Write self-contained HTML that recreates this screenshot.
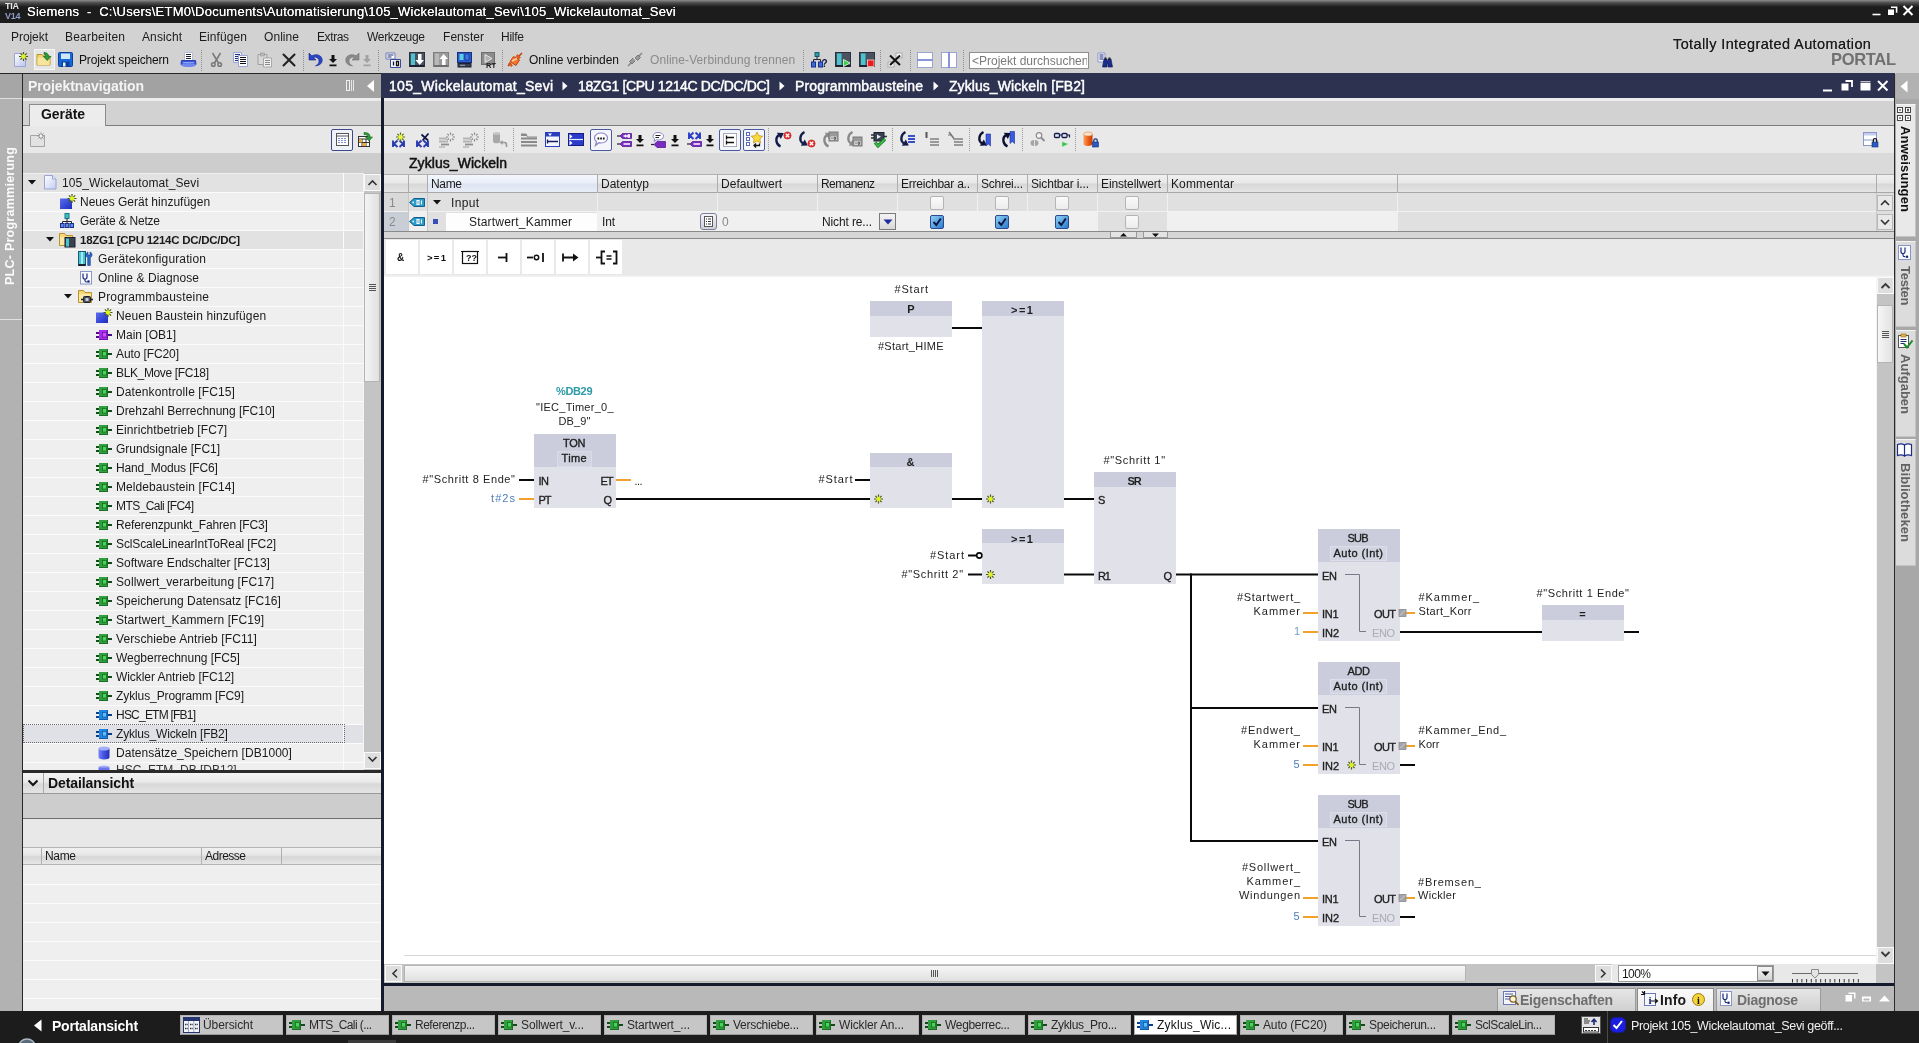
<!DOCTYPE html>
<html lang="de"><head><meta charset="utf-8"><title>TIA Portal</title>
<style>
html,body{margin:0;padding:0;}
body{width:1919px;height:1043px;overflow:hidden;background:#d2d2d2;position:relative;
 font-family:"Liberation Sans",sans-serif;font-size:12px;color:#1a1a1a;}
div{position:absolute;box-sizing:border-box;}
#app{left:0;top:0;width:1919px;height:1043px;will-change:transform;}
span.t{position:absolute;white-space:nowrap;display:block;}
svg{position:absolute;overflow:visible;}
.hdrgrad{background:linear-gradient(#f2f2f2 0%,#e4e4e4 45%,#d4d4d4 55%,#e2e2e2 100%);}
</style></head>
<body>
<div id="app">
<div style="left:0px;top:0px;width:1919px;height:23px;background:linear-gradient(#8a8a8a 0px,#4a4a4a 3px,#1c1c1c 7px,#1c1c1c 100%);"></div>
<span class="t" style="left:5px;top:0.5px;height:10px;line-height:10px;font-size:9px;color:#e8e8e8;font-weight:bold;letter-spacing:-0.3px;">TIA</span>
<span class="t" style="left:5px;top:10.5px;height:10px;line-height:10px;font-size:9px;color:#8f9bc4;font-weight:bold;letter-spacing:-0.3px;">V14</span>
<span class="t" style="left:27px;top:3.0px;height:17px;line-height:17px;font-size:13px;color:#ffffff;letter-spacing:0.24px;text-shadow:0 0 0.6px #fff;">Siemens&nbsp; -&nbsp; C:\Users\ETM0\Documents\Automatisierung\105_Wickelautomat_Sevi\105_Wickelautomat_Sevi</span>
<svg style="left:1870px;top:3px" width="46" height="18" viewBox="0 0 46 18"><g stroke="#fff" fill="none"><path d="M2.5 11.5h8" stroke-width="1.6"/><path d="M21 4.2h5.6v5.6" stroke-width="1.6"/><rect x="18" y="6.5" width="6" height="5.5" fill="#fff" stroke="none"/><path d="M33.5 3l9 9m0-9l-9 9" stroke-width="2"/></g></svg>
<div style="left:0px;top:23px;width:1919px;height:51px;background:#d2d2d2;"></div>
<span class="t" style="left:11px;top:29.0px;height:16px;line-height:16px;font-size:12px;color:#1c1c1c;letter-spacing:-0.06px;">Projekt</span>
<span class="t" style="left:65px;top:29.0px;height:16px;line-height:16px;font-size:12px;color:#1c1c1c;letter-spacing:0.22px;">Bearbeiten</span>
<span class="t" style="left:142px;top:29.0px;height:16px;line-height:16px;font-size:12px;color:#1c1c1c;letter-spacing:0.11px;">Ansicht</span>
<span class="t" style="left:199px;top:29.0px;height:16px;line-height:16px;font-size:12px;color:#1c1c1c;letter-spacing:0.09px;">Einfügen</span>
<span class="t" style="left:264px;top:29.0px;height:16px;line-height:16px;font-size:12px;color:#1c1c1c;letter-spacing:0.06px;">Online</span>
<span class="t" style="left:317px;top:29.0px;height:16px;line-height:16px;font-size:12px;color:#1c1c1c;letter-spacing:-0.4px;">Extras</span>
<span class="t" style="left:367px;top:29.0px;height:16px;line-height:16px;font-size:12px;color:#1c1c1c;letter-spacing:-0.31px;">Werkzeuge</span>
<span class="t" style="left:443px;top:29.0px;height:16px;line-height:16px;font-size:12px;color:#1c1c1c;letter-spacing:0.05px;">Fenster</span>
<span class="t" style="left:501px;top:29.0px;height:16px;line-height:16px;font-size:12px;color:#1c1c1c;letter-spacing:-0.25px;">Hilfe</span>
<span class="t" style="left:79px;top:52.0px;height:16px;line-height:16px;font-size:12px;color:#111;letter-spacing:-0.17px;">Projekt speichern</span>
<span class="t" style="left:529px;top:52.0px;height:16px;line-height:16px;font-size:12px;color:#111;letter-spacing:-0.05px;">Online verbinden</span>
<span class="t" style="left:650px;top:52.0px;height:16px;line-height:16px;font-size:12px;color:#8a8a8a;letter-spacing:0.07px;">Online-Verbindung trennen</span>
<span class="t" style="left:1673px;top:34.8px;height:18.5px;line-height:18.5px;font-size:14.5px;color:#1c1c1c;letter-spacing:0.39px;text-shadow:0 0 0.5px #333;">Totally Integrated Automation</span>
<span class="t" style="left:1831px;top:49.2px;height:20.5px;line-height:20.5px;font-size:16.5px;color:#707070;font-weight:bold;letter-spacing:-0.32px;">PORTAL</span>
<div style="left:969px;top:52px;width:120px;height:17px;background:#fff;border:1px solid #8e8e8e;overflow:hidden;"></div>
<span class="t" style="left:972px;top:53.0px;height:16px;line-height:16px;font-size:12px;color:#7a7a7a;width:115px;overflow:hidden;">&lt;Projekt durchsuchen</span>
<div style="left:0px;top:74px;width:23px;height:937px;background:#b2b2b2;"></div>
<div style="left:0px;top:74px;width:23px;height:25px;background:#a6a6a6;"></div>
<div style="left:0px;top:73px;width:384px;height:1px;background:#262626;"></div>
<div style="left:0px;top:98px;width:23px;height:1px;background:#e0e0e0;"></div>
<div style="left:0px;top:319px;width:23px;height:1px;background:#e0e0e0;"></div>
<div style="left:22px;top:74px;width:1px;height:937px;background:#262626;"></div>
<span class="t" style="left:0;top:0;width:140px;height:14px;line-height:14px;font-size:12.5px;font-weight:bold;color:#fafafa;letter-spacing:0.25px;transform-origin:0 0;transform:translate(3px,285px) rotate(-90deg);">PLC- Programmierung</span>
<div style="left:23px;top:74px;width:358px;height:24px;background:#a2a2a2;"></div>
<span class="t" style="left:28px;top:77.0px;height:18px;line-height:18px;font-size:14px;color:#f4f4f4;font-weight:bold;letter-spacing:-0.09px;">Projektnavigation</span>
<svg style="left:345px;top:79px" width="30" height="14" viewBox="0 0 30 14"><rect x="1.5" y="1.5" width="3" height="10" fill="none" stroke="#f0f0f0"/><path d="M6.5 1v11M8.5 1v11" stroke="#e6e6e6"/><path d="M29 1v12l-7-6z" fill="#fff"/></svg>
<div style="left:23px;top:98px;width:358px;height:28px;background:#d2d2d2;"></div>
<div style="left:23px;top:98px;width:358px;height:3px;background:#ededed;"></div>
<div style="left:23px;top:125px;width:358px;height:1px;background:#7c7c7c;"></div>
<div style="left:29px;top:104px;width:77px;height:22px;background:#ececec;border:1px solid #8a8a8a;border-bottom:none;"></div>
<span class="t" style="left:41px;top:104.5px;height:18px;line-height:18px;font-size:14px;color:#111;font-weight:bold;letter-spacing:-0.07px;">Geräte</span>
<div style="left:23px;top:126px;width:358px;height:27px;background:#e8e8e8;"></div>
<div style="left:23px;top:153px;width:358px;height:21px;background:#cdcdcd;"></div>
<div style="left:23px;top:173px;width:340px;height:597px;background:#efefef;overflow:hidden;"></div>
<div style="left:23px;top:192px;width:340px;height:1px;background:#fbfbfb;"></div>
<div style="left:23px;top:211px;width:340px;height:1px;background:#fbfbfb;"></div>
<div style="left:23px;top:230px;width:340px;height:1px;background:#fbfbfb;"></div>
<div style="left:23px;top:249px;width:340px;height:1px;background:#fbfbfb;"></div>
<div style="left:23px;top:268px;width:340px;height:1px;background:#fbfbfb;"></div>
<div style="left:23px;top:287px;width:340px;height:1px;background:#fbfbfb;"></div>
<div style="left:23px;top:306px;width:340px;height:1px;background:#fbfbfb;"></div>
<div style="left:23px;top:325px;width:340px;height:1px;background:#fbfbfb;"></div>
<div style="left:23px;top:344px;width:340px;height:1px;background:#fbfbfb;"></div>
<div style="left:23px;top:363px;width:340px;height:1px;background:#fbfbfb;"></div>
<div style="left:23px;top:382px;width:340px;height:1px;background:#fbfbfb;"></div>
<div style="left:23px;top:401px;width:340px;height:1px;background:#fbfbfb;"></div>
<div style="left:23px;top:420px;width:340px;height:1px;background:#fbfbfb;"></div>
<div style="left:23px;top:439px;width:340px;height:1px;background:#fbfbfb;"></div>
<div style="left:23px;top:458px;width:340px;height:1px;background:#fbfbfb;"></div>
<div style="left:23px;top:477px;width:340px;height:1px;background:#fbfbfb;"></div>
<div style="left:23px;top:496px;width:340px;height:1px;background:#fbfbfb;"></div>
<div style="left:23px;top:515px;width:340px;height:1px;background:#fbfbfb;"></div>
<div style="left:23px;top:534px;width:340px;height:1px;background:#fbfbfb;"></div>
<div style="left:23px;top:553px;width:340px;height:1px;background:#fbfbfb;"></div>
<div style="left:23px;top:572px;width:340px;height:1px;background:#fbfbfb;"></div>
<div style="left:23px;top:591px;width:340px;height:1px;background:#fbfbfb;"></div>
<div style="left:23px;top:610px;width:340px;height:1px;background:#fbfbfb;"></div>
<div style="left:23px;top:629px;width:340px;height:1px;background:#fbfbfb;"></div>
<div style="left:23px;top:648px;width:340px;height:1px;background:#fbfbfb;"></div>
<div style="left:23px;top:667px;width:340px;height:1px;background:#fbfbfb;"></div>
<div style="left:23px;top:686px;width:340px;height:1px;background:#fbfbfb;"></div>
<div style="left:23px;top:705px;width:340px;height:1px;background:#fbfbfb;"></div>
<div style="left:23px;top:724px;width:340px;height:1px;background:#fbfbfb;"></div>
<div style="left:23px;top:743px;width:340px;height:1px;background:#fbfbfb;"></div>
<div style="left:23px;top:762px;width:340px;height:1px;background:#fbfbfb;"></div>
<div style="left:23px;top:781px;width:340px;height:1px;background:#fbfbfb;"></div>
<div style="left:23px;top:174px;width:340px;height:18px;background:#e2e2e2;"></div>
<div style="left:23px;top:231px;width:340px;height:18px;background:#e2e2e2;"></div>
<div style="left:23px;top:725px;width:340px;height:18px;background:#dfe1e6;"></div>
<div style="left:23px;top:724px;width:322px;height:19px;border:1px dotted #6a6a6a;background:none;"></div>
<div style="left:343px;top:173px;width:1px;height:597px;background:#fbfbfb;"></div>
<div style="left:363px;top:173px;width:18px;height:597px;background:#c4c4c4;border-left:1px solid #f4f4f4;"></div>
<div style="left:364px;top:174px;width:17px;height:17px;background:#dedede;border:1px solid #fafafa;"></div>
<div style="left:364px;top:752px;width:17px;height:17px;background:#dedede;border:1px solid #fafafa;"></div>
<div style="left:364px;top:193px;width:16px;height:189px;background:linear-gradient(90deg,#f4f4f4,#e0e0e0);border:1px solid #b4b4b4;"></div>
<svg style="left:364px;top:174px" width="17" height="600" viewBox="0 0 17 600"><g fill="none" stroke="#333" stroke-width="1.6"><path d="M4.5 11l4-4 4 4"/><path d="M4.5 583l4 4 4-4"/></g><path d="M5 110.500h7M5 112.500h7M5 114.500h7M5 116.500h7" stroke="#555" stroke-width="1"/></svg>
<span class="t" style="left:62px;top:174.5px;height:16px;line-height:16px;font-size:12px;color:#1a1a1a;letter-spacing:0.08px;">105_Wickelautomat_Sevi</span>
<span class="t" style="left:80px;top:193.5px;height:16px;line-height:16px;font-size:12px;color:#1a1a1a;">Neues Gerät hinzufügen</span>
<span class="t" style="left:80px;top:212.5px;height:16px;line-height:16px;font-size:12px;color:#1a1a1a;letter-spacing:-0.21px;">Geräte &amp; Netze</span>
<span class="t" style="left:80px;top:232.6px;height:15.5px;line-height:15.5px;font-size:11.5px;color:#1a1a1a;font-weight:bold;letter-spacing:-0.27px;">18ZG1 [CPU 1214C DC/DC/DC]</span>
<span class="t" style="left:98px;top:250.5px;height:16px;line-height:16px;font-size:12px;color:#1a1a1a;letter-spacing:0.14px;">Gerätekonfiguration</span>
<span class="t" style="left:98px;top:269.5px;height:16px;line-height:16px;font-size:12px;color:#1a1a1a;letter-spacing:0.06px;">Online &amp; Diagnose</span>
<span class="t" style="left:98px;top:288.5px;height:16px;line-height:16px;font-size:12px;color:#1a1a1a;letter-spacing:0.18px;">Programmbausteine</span>
<span class="t" style="left:116px;top:307.5px;height:16px;line-height:16px;font-size:12px;color:#1a1a1a;letter-spacing:0.11px;">Neuen Baustein hinzufügen</span>
<span class="t" style="left:116px;top:326.5px;height:16px;line-height:16px;font-size:12px;color:#1a1a1a;">Main [OB1]</span>
<span class="t" style="left:116px;top:345.5px;height:16px;line-height:16px;font-size:12px;color:#1a1a1a;letter-spacing:-0.1px;">Auto [FC20]</span>
<span class="t" style="left:116px;top:364.5px;height:16px;line-height:16px;font-size:12px;color:#1a1a1a;letter-spacing:-0.36px;">BLK_Move [FC18]</span>
<span class="t" style="left:116px;top:383.5px;height:16px;line-height:16px;font-size:12px;color:#1a1a1a;letter-spacing:0.11px;">Datenkontrolle [FC15]</span>
<span class="t" style="left:116px;top:402.5px;height:16px;line-height:16px;font-size:12px;color:#1a1a1a;letter-spacing:-0.02px;">Drehzahl Berrechnung [FC10]</span>
<span class="t" style="left:116px;top:421.5px;height:16px;line-height:16px;font-size:12px;color:#1a1a1a;letter-spacing:0.08px;">Einrichtbetrieb [FC7]</span>
<span class="t" style="left:116px;top:440.5px;height:16px;line-height:16px;font-size:12px;color:#1a1a1a;">Grundsignale [FC1]</span>
<span class="t" style="left:116px;top:459.5px;height:16px;line-height:16px;font-size:12px;color:#1a1a1a;letter-spacing:-0.14px;">Hand_Modus [FC6]</span>
<span class="t" style="left:116px;top:478.5px;height:16px;line-height:16px;font-size:12px;color:#1a1a1a;letter-spacing:0.08px;">Meldebaustein [FC14]</span>
<span class="t" style="left:116px;top:497.5px;height:16px;line-height:16px;font-size:12px;color:#1a1a1a;letter-spacing:-0.56px;">MTS_Cali [FC4]</span>
<span class="t" style="left:116px;top:516.5px;height:16px;line-height:16px;font-size:12px;color:#1a1a1a;letter-spacing:-0.14px;">Referenzpunkt_Fahren [FC3]</span>
<span class="t" style="left:116px;top:535.5px;height:16px;line-height:16px;font-size:12px;color:#1a1a1a;letter-spacing:-0.12px;">SclScaleLinearIntToReal [FC2]</span>
<span class="t" style="left:116px;top:554.5px;height:16px;line-height:16px;font-size:12px;color:#1a1a1a;letter-spacing:0.02px;">Software Endschalter [FC13]</span>
<span class="t" style="left:116px;top:573.5px;height:16px;line-height:16px;font-size:12px;color:#1a1a1a;letter-spacing:0.1px;">Sollwert_verarbeitung [FC17]</span>
<span class="t" style="left:116px;top:592.5px;height:16px;line-height:16px;font-size:12px;color:#1a1a1a;letter-spacing:0.03px;">Speicherung Datensatz [FC16]</span>
<span class="t" style="left:116px;top:611.5px;height:16px;line-height:16px;font-size:12px;color:#1a1a1a;letter-spacing:0.09px;">Startwert_Kammern [FC19]</span>
<span class="t" style="left:116px;top:630.5px;height:16px;line-height:16px;font-size:12px;color:#1a1a1a;letter-spacing:0.1px;">Verschiebe Antrieb [FC11]</span>
<span class="t" style="left:116px;top:649.5px;height:16px;line-height:16px;font-size:12px;color:#1a1a1a;letter-spacing:-0.03px;">Wegberrechnung [FC5]</span>
<span class="t" style="left:116px;top:668.5px;height:16px;line-height:16px;font-size:12px;color:#1a1a1a;letter-spacing:-0.06px;">Wickler Antrieb [FC12]</span>
<span class="t" style="left:116px;top:687.5px;height:16px;line-height:16px;font-size:12px;color:#1a1a1a;letter-spacing:-0.1px;">Zyklus_Programm [FC9]</span>
<span class="t" style="left:116px;top:706.5px;height:16px;line-height:16px;font-size:12px;color:#1a1a1a;letter-spacing:-0.78px;">HSC_ETM [FB1]</span>
<span class="t" style="left:116px;top:725.5px;height:16px;line-height:16px;font-size:12px;color:#1a1a1a;letter-spacing:-0.18px;">Zyklus_Wickeln [FB2]</span>
<span class="t" style="left:116px;top:744.5px;height:16px;line-height:16px;font-size:12px;color:#1a1a1a;letter-spacing:0.04px;">Datensätze_Speichern [DB1000]</span>
<div style="left:23px;top:762px;width:340px;height:8px;overflow:hidden;background:none;"><span class="t" style="left:93px;top:1px;font-size:12px;line-height:14px;color:#333;">HSC_ETM_DB [DB12]</span></div>
<div style="left:23px;top:770px;width:358px;height:3px;background:#2a2a2a;"></div>
<div style="left:23px;top:773px;width:358px;height:21px;background:linear-gradient(#f4f4f4,#e9e9e9 45%,#d8d8d8 55%,#e4e4e4);border-bottom:1px solid #9a9a9a;"></div>
<div style="left:43px;top:773px;width:1px;height:21px;background:#a8a8a8;"></div>
<svg style="left:27px;top:778px" width="12" height="10" viewBox="0 0 12 10"><path d="M1.5 2.5l4.5 4.5 4.5-4.5" fill="none" stroke="#111" stroke-width="2"/></svg>
<span class="t" style="left:48px;top:773.8px;height:18px;line-height:18px;font-size:14px;color:#111;font-weight:bold;letter-spacing:-0.09px;">Detailansicht</span>
<div style="left:23px;top:794px;width:358px;height:24px;background:#cdcdcd;"></div>
<div style="left:23px;top:818px;width:358px;height:1px;background:#6e6e6e;"></div>
<div style="left:23px;top:819px;width:358px;height:28px;background:#e8e8e8;"></div>
<div style="left:23px;top:847px;width:358px;height:18px;background:linear-gradient(#f0f0f0,#e6e6e6 45%,#d6d6d6 55%,#e6e6e6);border-top:1px solid #b4b4b4;border-bottom:1px solid #b4b4b4;"></div>
<div style="left:41px;top:848px;width:1px;height:16px;background:#b0b0b0;"></div>
<div style="left:201px;top:848px;width:1px;height:16px;background:#b0b0b0;"></div>
<div style="left:281px;top:848px;width:1px;height:16px;background:#b0b0b0;"></div>
<span class="t" style="left:45px;top:848.0px;height:16px;line-height:16px;font-size:12px;color:#1a1a1a;letter-spacing:-0.34px;">Name</span>
<span class="t" style="left:205px;top:848.0px;height:16px;line-height:16px;font-size:12px;color:#1a1a1a;letter-spacing:-0.5px;">Adresse</span>
<div style="left:23px;top:865px;width:358px;height:146px;background:#efefef;"></div>
<div style="left:23px;top:884px;width:358px;height:1px;background:#fbfbfb;"></div>
<div style="left:23px;top:903px;width:358px;height:1px;background:#fbfbfb;"></div>
<div style="left:23px;top:922px;width:358px;height:1px;background:#fbfbfb;"></div>
<div style="left:23px;top:941px;width:358px;height:1px;background:#fbfbfb;"></div>
<div style="left:23px;top:960px;width:358px;height:1px;background:#fbfbfb;"></div>
<div style="left:23px;top:979px;width:358px;height:1px;background:#fbfbfb;"></div>
<div style="left:23px;top:998px;width:358px;height:1px;background:#fbfbfb;"></div>
<div style="left:23px;top:1017px;width:358px;height:1px;background:#fbfbfb;"></div>
<div style="left:381px;top:74px;width:3px;height:937px;background:#151b2c;"></div>
<div style="left:384px;top:73px;width:1511px;height:25px;background:#2d3250;"></div>
<div style="left:381px;top:73px;width:3px;height:25px;background:#2d3250;"></div>
<span class="t" style="left:389px;top:77.0px;height:18px;line-height:18px;font-size:14px;color:#ffffff;letter-spacing:0.29px;-webkit-text-stroke:0.45px #fff;">105_Wickelautomat_Sevi</span>
<span class="t" style="left:578px;top:77.0px;height:18px;line-height:18px;font-size:14px;color:#ffffff;letter-spacing:-0.38px;-webkit-text-stroke:0.45px #fff;">18ZG1 [CPU 1214C DC/DC/DC]</span>
<span class="t" style="left:795px;top:77.0px;height:18px;line-height:18px;font-size:14px;color:#ffffff;letter-spacing:0.12px;-webkit-text-stroke:0.45px #fff;">Programmbausteine</span>
<span class="t" style="left:949px;top:77.0px;height:18px;line-height:18px;font-size:14px;color:#ffffff;letter-spacing:0.07px;-webkit-text-stroke:0.45px #fff;">Zyklus_Wickeln [FB2]</span>
<svg style="left:562px;top:81px" width="7" height="10" viewBox="0 0 7 10"><path d="M0.5 0.5l5 4.5-5 4.5z" fill="#fff"/></svg>
<svg style="left:779px;top:81px" width="7" height="10" viewBox="0 0 7 10"><path d="M0.5 0.5l5 4.5-5 4.5z" fill="#fff"/></svg>
<svg style="left:933px;top:81px" width="7" height="10" viewBox="0 0 7 10"><path d="M0.5 0.5l5 4.5-5 4.5z" fill="#fff"/></svg>
<svg style="left:1820px;top:78px" width="72" height="16" viewBox="0 0 72 16"><g stroke="#fff" fill="none"><path d="M3 12.5h9" stroke-width="2"/><path d="M25.5 3h6.5v6" stroke-width="1.8"/><rect x="21.5" y="5.5" width="7" height="7" fill="#fff" stroke="none"/><rect x="40.5" y="3" width="10" height="9.5" fill="#fff" stroke="none"/><path d="M40 4.2h11" stroke="#2d3250" stroke-width="1" /><path d="M58 3l9.5 9.5m0-9.5l-9.500 9.500" stroke-width="2"/></g></svg>
<div style="left:384px;top:98px;width:1510px;height:27px;background:#d2d2d2;"></div>
<div style="left:384px;top:98px;width:1510px;height:3px;background:#ededed;"></div>
<div style="left:384px;top:125px;width:1510px;height:1px;background:#7c7c7c;"></div>
<div style="left:384px;top:126px;width:1510px;height:27px;background:#e9e9e9;"></div>
<div style="left:384px;top:153px;width:1510px;height:21px;background:#dadada;"></div>
<span class="t" style="left:409px;top:154.0px;height:18px;line-height:18px;font-size:14px;color:#111;letter-spacing:0.06px;-webkit-text-stroke:0.5px #111;">Zyklus_Wickeln</span>
<div style="left:384px;top:174px;width:1510px;height:19px;background:linear-gradient(#f0f0f0,#e8e8e8 45%,#d8d8d8 55%,#e4e4e4);border-top:1px solid #b0b0b0;border-bottom:1px solid #a8a8a8;"></div>
<div style="left:428px;top:175px;width:169px;height:17px;background:linear-gradient(#f4f7fc,#e9eef8 45%,#dde4f2 55%,#e8edf6);"></div>
<div style="left:408px;top:175px;width:1px;height:17px;background:#adadad;"></div>
<div style="left:427px;top:175px;width:1px;height:17px;background:#adadad;"></div>
<div style="left:597px;top:175px;width:1px;height:17px;background:#adadad;"></div>
<div style="left:717px;top:175px;width:1px;height:17px;background:#adadad;"></div>
<div style="left:817px;top:175px;width:1px;height:17px;background:#adadad;"></div>
<div style="left:897px;top:175px;width:1px;height:17px;background:#adadad;"></div>
<div style="left:977px;top:175px;width:1px;height:17px;background:#adadad;"></div>
<div style="left:1027px;top:175px;width:1px;height:17px;background:#adadad;"></div>
<div style="left:1097px;top:175px;width:1px;height:17px;background:#adadad;"></div>
<div style="left:1167px;top:175px;width:1px;height:17px;background:#adadad;"></div>
<div style="left:1397px;top:175px;width:1px;height:17px;background:#adadad;"></div>
<div style="left:1876px;top:175px;width:1px;height:17px;background:#adadad;"></div>
<span class="t" style="left:431px;top:176.0px;height:16px;line-height:16px;font-size:12px;color:#1a1a1a;letter-spacing:-0.34px;">Name</span>
<span class="t" style="left:601px;top:176.0px;height:16px;line-height:16px;font-size:12px;color:#1a1a1a;">Datentyp</span>
<span class="t" style="left:721px;top:176.0px;height:16px;line-height:16px;font-size:12px;color:#1a1a1a;letter-spacing:0.03px;">Defaultwert</span>
<span class="t" style="left:821px;top:176.0px;height:16px;line-height:16px;font-size:12px;color:#1a1a1a;letter-spacing:-0.58px;">Remanenz</span>
<span class="t" style="left:901px;top:176.0px;height:16px;line-height:16px;font-size:12px;color:#1a1a1a;letter-spacing:-0.23px;">Erreichbar a..</span>
<span class="t" style="left:981px;top:176.0px;height:16px;line-height:16px;font-size:12px;color:#1a1a1a;letter-spacing:-0.25px;">Schrei...</span>
<span class="t" style="left:1031px;top:176.0px;height:16px;line-height:16px;font-size:12px;color:#1a1a1a;letter-spacing:-0.17px;">Sichtbar i...</span>
<span class="t" style="left:1101px;top:176.0px;height:16px;line-height:16px;font-size:12px;color:#1a1a1a;letter-spacing:-0.12px;">Einstellwert</span>
<span class="t" style="left:1171px;top:176.0px;height:16px;line-height:16px;font-size:12px;color:#1a1a1a;letter-spacing:0.12px;">Kommentar</span>
<div style="left:384px;top:193px;width:1492px;height:19px;background:#e0e0e0;"></div>
<div style="left:384px;top:212px;width:1492px;height:19px;background:#e0e0e0;"></div>
<div style="left:597px;top:212px;width:800px;height:19px;background:#f0f0f0;"></div>
<div style="left:1097px;top:212px;width:70px;height:19px;background:#e0e0e0;"></div>
<div style="left:384px;top:193px;width:24px;height:19px;background:#d9d9d9;"></div>
<div style="left:384px;top:212px;width:24px;height:19px;background:#c9cdd6;"></div>
<div style="left:408px;top:212px;width:19px;height:19px;background:#f0f0f0;"></div>
<div style="left:446px;top:213px;width:151px;height:18px;background:#fdfdfd;"></div>
<div style="left:384px;top:211px;width:1492px;height:1px;background:#f2f2f2;"></div>
<div style="left:597px;top:193px;width:1px;height:38px;background:#f0f0f0;"></div>
<div style="left:717px;top:193px;width:1px;height:38px;background:#f0f0f0;"></div>
<div style="left:817px;top:193px;width:1px;height:38px;background:#f0f0f0;"></div>
<div style="left:897px;top:193px;width:1px;height:38px;background:#f0f0f0;"></div>
<div style="left:977px;top:193px;width:1px;height:38px;background:#f0f0f0;"></div>
<div style="left:1027px;top:193px;width:1px;height:38px;background:#f0f0f0;"></div>
<div style="left:1097px;top:193px;width:1px;height:38px;background:#f0f0f0;"></div>
<div style="left:1167px;top:193px;width:1px;height:38px;background:#f0f0f0;"></div>
<div style="left:1397px;top:193px;width:1px;height:38px;background:#f0f0f0;"></div>
<div style="left:427px;top:193px;width:1px;height:38px;background:#c8c8c8;"></div>
<div style="left:408px;top:193px;width:1px;height:38px;background:#c8c8c8;"></div>
<span class="t" style="left:389px;top:194.5px;height:16px;line-height:16px;font-size:12px;color:#8a8a8a;">1</span>
<span class="t" style="left:389px;top:213.5px;height:16px;line-height:16px;font-size:12px;color:#8a8a8a;">2</span>
<span class="t" style="left:451px;top:194.5px;height:16px;line-height:16px;font-size:12px;color:#1a1a1a;letter-spacing:0.33px;">Input</span>
<span class="t" style="left:469px;top:213.5px;height:16px;line-height:16px;font-size:12px;color:#1a1a1a;letter-spacing:0.2px;">Startwert_Kammer</span>
<span class="t" style="left:602px;top:213.5px;height:16px;line-height:16px;font-size:12px;color:#1a1a1a;letter-spacing:-0.17px;">Int</span>
<span class="t" style="left:722px;top:213.5px;height:16px;line-height:16px;font-size:12px;color:#8a8a8a;">0</span>
<span class="t" style="left:822px;top:213.5px;height:16px;line-height:16px;font-size:12px;color:#1a1a1a;letter-spacing:-0.13px;">Nicht re...</span>
<div style="left:384px;top:231px;width:1510px;height:1px;background:#8a8a8a;"></div>
<div style="left:384px;top:232px;width:1510px;height:6px;background:#d6d6d6;"></div>
<div style="left:384px;top:238px;width:1510px;height:1px;background:#8a8a8a;"></div>
<div style="left:1876px;top:193px;width:18px;height:38px;background:#dedede;"></div>
<div style="left:1876px;top:193px;width:1px;height:38px;background:#c8c8c8;"></div>
<div style="left:1877px;top:195px;width:16px;height:16px;background:#e8e8e8;border:1px solid #b8b8b8;"></div>
<div style="left:1877px;top:214px;width:16px;height:16px;background:#e8e8e8;border:1px solid #b8b8b8;"></div>
<svg style="left:1877px;top:195px" width="16" height="36" viewBox="0 0 16 36"><g fill="none" stroke="#333" stroke-width="1.6"><path d="M4 10l4-4 4 4"/><path d="M4 25l4 4 4-4"/></g></svg>
<div style="left:1110px;top:232px;width:27px;height:6px;background:#e4e4e4;border:1px solid #9a9a9a;border-top:none;"></div>
<div style="left:1143px;top:232px;width:25px;height:6px;background:#e4e4e4;border:1px solid #9a9a9a;border-top:none;"></div>
<svg style="left:1110px;top:232px" width="60" height="6" viewBox="0 0 60 6"><path d="M10 4.5l3.500-3.500 3.500 3.500z M42 1.500l3.500 3.500 3.500-3.500z" fill="#111"/></svg>
<div style="left:384px;top:239px;width:1510px;height:36px;background:#e9e9e9;"></div>
<div style="left:386px;top:240px;width:32px;height:34px;background:#ffffff;"></div>
<div style="left:420px;top:240px;width:32px;height:34px;background:#ffffff;"></div>
<div style="left:454px;top:240px;width:32px;height:34px;background:#ffffff;"></div>
<div style="left:488px;top:240px;width:32px;height:34px;background:#ffffff;"></div>
<div style="left:522px;top:240px;width:32px;height:34px;background:#ffffff;"></div>
<div style="left:556px;top:240px;width:32px;height:34px;background:#ffffff;"></div>
<div style="left:590px;top:240px;width:32px;height:34px;background:#ffffff;"></div>
<div style="left:384px;top:274px;width:1510px;height:3px;background:linear-gradient(#e6e6e6,#f4f4f4);"></div>
<div style="left:384px;top:277px;width:1492px;height:687px;background:#ffffff;"></div>
<div style="left:404px;top:955px;width:1472px;height:1px;background:#d8d8d8;"></div>
<div style="left:1876px;top:277px;width:18px;height:687px;background:#c4c4c4;border-left:1px solid #f4f4f4;"></div>
<div style="left:1877px;top:277px;width:17px;height:17px;background:#dedede;border:1px solid #fafafa;"></div>
<div style="left:1877px;top:947px;width:17px;height:17px;background:#dedede;border:1px solid #fafafa;"></div>
<div style="left:1877px;top:305px;width:16px;height:58px;background:linear-gradient(90deg,#f6f6f6,#e2e2e2);border:1px solid #b4b4b4;"></div>
<svg style="left:1877px;top:277px" width="17" height="690" viewBox="0 0 17 690"><g fill="none" stroke="#3a3a3a" stroke-width="1.800"><path d="M4.500 11l4-4 4 4"/><path d="M4.500 675l4 4 4-4"/></g><path d="M5 54.500h7M5 56.500h7M5 58.500h7M5 60.500h7" stroke="#555"/></svg>
<div style="left:384px;top:964px;width:1510px;height:19px;background:#c4c4c4;"></div>
<div style="left:385px;top:965px;width:17px;height:17px;background:#dedede;border:1px solid #fafafa;"></div>
<div style="left:1595px;top:965px;width:17px;height:17px;background:#dedede;border:1px solid #fafafa;"></div>
<div style="left:404px;top:965px;width:1062px;height:17px;background:linear-gradient(#f6f6f6,#e0e0e0);border:1px solid #b4b4b4;"></div>
<svg style="left:386px;top:965px" width="1230" height="17" viewBox="0 0 1230 17"><g fill="none" stroke="#333" stroke-width="1.6"><path d="M11 4.500l-4 4 4 4"/><path d="M1215 4.500l4 4-4 4"/></g><path d="M545.500 5v7M547.500 5v7M549.500 5v7M551.500 5v7" stroke="#555"/></svg>
<div style="left:1612px;top:964px;width:264px;height:19px;background:#e8e8e8;"></div>
<div style="left:1618px;top:965px;width:156px;height:17px;background:#fff;border:1px solid #9a9a9a;"></div>
<span class="t" style="left:1622px;top:966.0px;height:16px;line-height:16px;font-size:12px;color:#1a1a1a;letter-spacing:-0.56px;">100%</span>
<div style="left:1757px;top:966px;width:16px;height:15px;background:linear-gradient(#f4f4f4,#d4d4d4);border:1px solid #8a8a8a;"></div>
<svg style="left:1757px;top:966px" width="17" height="15" viewBox="0 0 17 15"><path d="M4.500 5.500h8l-4 4.500z" fill="#111"/></svg>
<svg style="left:1788px;top:966px" width="76" height="17" viewBox="0 0 76 17"><path d="M4 7.500h66" stroke="#6a6a6a"/><g stroke="#333"><path d="M4.5 13v3.500"/><path d="M9.2 13v3.500"/><path d="M13.9 13v3.500"/><path d="M18.6 13v3.500"/><path d="M23.3 13v3.500"/><path d="M28.0 13v3.500"/><path d="M32.7 13v3.500"/><path d="M37.4 13v3.500"/><path d="M42.1 13v3.500"/><path d="M46.8 13v3.500"/><path d="M51.5 13v3.500"/><path d="M56.2 13v3.500"/><path d="M60.9 13v3.500"/><path d="M65.6 13v3.500"/><path d="M70.3 13v3.500"/></g><path d="M23.500 3.500h7v5l-3.500 3.500-3.500-3.500z" fill="#e4e4e4" stroke="#8a8a8a"/></svg>
<div style="left:381px;top:983px;width:1515px;height:3px;background:#151b2c;"></div>
<div style="left:384px;top:986px;width:1510px;height:25px;background:#b9b9b9;"></div>
<div style="left:1497px;top:988px;width:139px;height:23px;background:linear-gradient(#e6e6e6,#d0d0d0);border:1px solid #9a9a9a;border-bottom:none;"></div>
<div style="left:1637px;top:988px;width:77px;height:23px;background:linear-gradient(#fafafa,#ececec);border:1px solid #8a8a8a;border-bottom:none;"></div>
<div style="left:1716px;top:988px;width:105px;height:23px;background:linear-gradient(#e6e6e6,#d0d0d0);border:1px solid #9a9a9a;border-bottom:none;"></div>
<span class="t" style="left:1520px;top:991.0px;height:18px;line-height:18px;font-size:14px;color:#6e6e6e;font-weight:bold;letter-spacing:-0.22px;">Eigenschaften</span>
<span class="t" style="left:1660px;top:991.0px;height:18px;line-height:18px;font-size:14px;color:#1a1a1a;font-weight:bold;letter-spacing:0.12px;">Info</span>
<span class="t" style="left:1737px;top:991.0px;height:18px;line-height:18px;font-size:14px;color:#6e6e6e;font-weight:bold;letter-spacing:-0.29px;">Diagnose</span>
<svg style="left:1843px;top:991px" width="46" height="14" viewBox="0 0 46 14"><g fill="#fff" stroke="none"><path d="M5.500 1.500h7v6h-1.500v-4.500h-5.500z"/><rect x="2.500" y="4" width="6.500" height="6.500"/><path d="M19 5.500h9v5h-9z M20.500 7.500v2h6v-2z" fill-rule="evenodd"/><path d="M36 10.500h11l-5.500-6z"/></g></svg>
<div style="left:1894px;top:74px;width:2px;height:937px;background:#2a2a2a;"></div>
<div style="left:0px;top:1011px;width:1919px;height:32px;background:#1c1c1c;"></div>
<svg style="left:33px;top:1019px" width="9" height="13" viewBox="0 0 9 13"><path d="M8.500 0.500v12l-7.500-6z" fill="#fff"/></svg>
<span class="t" style="left:52px;top:1017.0px;height:18px;line-height:18px;font-size:14px;color:#ffffff;font-weight:bold;letter-spacing:-0.22px;">Portalansicht</span>
<div style="left:180px;top:1015px;width:103px;height:20px;background:#c6c6c6;border:1px solid #b0b0b0;border-bottom-color:#9a9a9a;"></div>
<span class="t" style="left:203px;top:1017.0px;height:16px;line-height:16px;font-size:12px;color:#2a2a2a;letter-spacing:-0.09px;">Übersicht</span>
<div style="left:286px;top:1015px;width:103px;height:20px;background:#c6c6c6;border:1px solid #b0b0b0;border-bottom-color:#9a9a9a;"></div>
<svg style="left:289px;top:1019px" width="16" height="12" viewBox="0 0 16 12"><path d="M0 3h3v2H0zM0 7h3v2H0zM12 5h4v2h-4z" fill="#124a1a"/><rect x="3" y="1" width="9" height="10" fill="#2fa03c"/><path d="M3 10.500h9M11.500 1v10" stroke="#124a1a" stroke-width="1" opacity="0.600"/><rect x="6.500" y="3.500" width="4" height="4.500" fill="#46d657" stroke="#124a1a" stroke-width="0.800" stroke-opacity="0.700"/></svg>
<span class="t" style="left:309px;top:1017.0px;height:16px;line-height:16px;font-size:12px;color:#2a2a2a;letter-spacing:-0.58px;">MTS_Cali (...</span>
<div style="left:392px;top:1015px;width:103px;height:20px;background:#c6c6c6;border:1px solid #b0b0b0;border-bottom-color:#9a9a9a;"></div>
<svg style="left:395px;top:1019px" width="16" height="12" viewBox="0 0 16 12"><path d="M0 3h3v2H0zM0 7h3v2H0zM12 5h4v2h-4z" fill="#124a1a"/><rect x="3" y="1" width="9" height="10" fill="#2fa03c"/><path d="M3 10.500h9M11.500 1v10" stroke="#124a1a" stroke-width="1" opacity="0.600"/><rect x="6.500" y="3.500" width="4" height="4.500" fill="#46d657" stroke="#124a1a" stroke-width="0.800" stroke-opacity="0.700"/></svg>
<span class="t" style="left:415px;top:1017.0px;height:16px;line-height:16px;font-size:12px;color:#2a2a2a;letter-spacing:-0.49px;">Referenzp...</span>
<div style="left:498px;top:1015px;width:103px;height:20px;background:#c6c6c6;border:1px solid #b0b0b0;border-bottom-color:#9a9a9a;"></div>
<svg style="left:501px;top:1019px" width="16" height="12" viewBox="0 0 16 12"><path d="M0 3h3v2H0zM0 7h3v2H0zM12 5h4v2h-4z" fill="#124a1a"/><rect x="3" y="1" width="9" height="10" fill="#2fa03c"/><path d="M3 10.500h9M11.500 1v10" stroke="#124a1a" stroke-width="1" opacity="0.600"/><rect x="6.500" y="3.500" width="4" height="4.500" fill="#46d657" stroke="#124a1a" stroke-width="0.800" stroke-opacity="0.700"/></svg>
<span class="t" style="left:521px;top:1017.0px;height:16px;line-height:16px;font-size:12px;color:#2a2a2a;letter-spacing:-0.12px;">Sollwert_v...</span>
<div style="left:604px;top:1015px;width:103px;height:20px;background:#c6c6c6;border:1px solid #b0b0b0;border-bottom-color:#9a9a9a;"></div>
<svg style="left:607px;top:1019px" width="16" height="12" viewBox="0 0 16 12"><path d="M0 3h3v2H0zM0 7h3v2H0zM12 5h4v2h-4z" fill="#124a1a"/><rect x="3" y="1" width="9" height="10" fill="#2fa03c"/><path d="M3 10.500h9M11.500 1v10" stroke="#124a1a" stroke-width="1" opacity="0.600"/><rect x="6.500" y="3.500" width="4" height="4.500" fill="#46d657" stroke="#124a1a" stroke-width="0.800" stroke-opacity="0.700"/></svg>
<span class="t" style="left:627px;top:1017.0px;height:16px;line-height:16px;font-size:12px;color:#2a2a2a;letter-spacing:-0.14px;">Startwert_...</span>
<div style="left:710px;top:1015px;width:103px;height:20px;background:#c6c6c6;border:1px solid #b0b0b0;border-bottom-color:#9a9a9a;"></div>
<svg style="left:713px;top:1019px" width="16" height="12" viewBox="0 0 16 12"><path d="M0 3h3v2H0zM0 7h3v2H0zM12 5h4v2h-4z" fill="#124a1a"/><rect x="3" y="1" width="9" height="10" fill="#2fa03c"/><path d="M3 10.500h9M11.500 1v10" stroke="#124a1a" stroke-width="1" opacity="0.600"/><rect x="6.500" y="3.500" width="4" height="4.500" fill="#46d657" stroke="#124a1a" stroke-width="0.800" stroke-opacity="0.700"/></svg>
<span class="t" style="left:733px;top:1017.0px;height:16px;line-height:16px;font-size:12px;color:#2a2a2a;letter-spacing:-0.28px;">Verschiebe...</span>
<div style="left:816px;top:1015px;width:103px;height:20px;background:#c6c6c6;border:1px solid #b0b0b0;border-bottom-color:#9a9a9a;"></div>
<svg style="left:819px;top:1019px" width="16" height="12" viewBox="0 0 16 12"><path d="M0 3h3v2H0zM0 7h3v2H0zM12 5h4v2h-4z" fill="#124a1a"/><rect x="3" y="1" width="9" height="10" fill="#2fa03c"/><path d="M3 10.500h9M11.500 1v10" stroke="#124a1a" stroke-width="1" opacity="0.600"/><rect x="6.500" y="3.500" width="4" height="4.500" fill="#46d657" stroke="#124a1a" stroke-width="0.800" stroke-opacity="0.700"/></svg>
<span class="t" style="left:839px;top:1017.0px;height:16px;line-height:16px;font-size:12px;color:#2a2a2a;letter-spacing:-0.14px;">Wickler An...</span>
<div style="left:922px;top:1015px;width:103px;height:20px;background:#c6c6c6;border:1px solid #b0b0b0;border-bottom-color:#9a9a9a;"></div>
<svg style="left:925px;top:1019px" width="16" height="12" viewBox="0 0 16 12"><path d="M0 3h3v2H0zM0 7h3v2H0zM12 5h4v2h-4z" fill="#124a1a"/><rect x="3" y="1" width="9" height="10" fill="#2fa03c"/><path d="M3 10.500h9M11.500 1v10" stroke="#124a1a" stroke-width="1" opacity="0.600"/><rect x="6.500" y="3.500" width="4" height="4.500" fill="#46d657" stroke="#124a1a" stroke-width="0.800" stroke-opacity="0.700"/></svg>
<span class="t" style="left:945px;top:1017.0px;height:16px;line-height:16px;font-size:12px;color:#2a2a2a;letter-spacing:-0.32px;">Wegberrec...</span>
<div style="left:1028px;top:1015px;width:103px;height:20px;background:#c6c6c6;border:1px solid #b0b0b0;border-bottom-color:#9a9a9a;"></div>
<svg style="left:1031px;top:1019px" width="16" height="12" viewBox="0 0 16 12"><path d="M0 3h3v2H0zM0 7h3v2H0zM12 5h4v2h-4z" fill="#124a1a"/><rect x="3" y="1" width="9" height="10" fill="#2fa03c"/><path d="M3 10.500h9M11.500 1v10" stroke="#124a1a" stroke-width="1" opacity="0.600"/><rect x="6.500" y="3.500" width="4" height="4.500" fill="#46d657" stroke="#124a1a" stroke-width="0.800" stroke-opacity="0.700"/></svg>
<span class="t" style="left:1051px;top:1017.0px;height:16px;line-height:16px;font-size:12px;color:#2a2a2a;letter-spacing:-0.33px;">Zyklus_Pro...</span>
<div style="left:1134px;top:1015px;width:103px;height:20px;background:#ffffff;border:1px solid #b0b0b0;border-bottom-color:#9a9a9a;"></div>
<svg style="left:1137px;top:1019px" width="16" height="12" viewBox="0 0 16 12"><path d="M0 3h3v2H0zM0 7h3v2H0zM12 5h4v2h-4z" fill="#0b3f8a"/><rect x="3" y="1" width="9" height="10" fill="#1f86e0"/><path d="M3 10.500h9M11.500 1v10" stroke="#0b3f8a" stroke-width="1" opacity="0.600"/><rect x="6.500" y="3.500" width="4" height="4.500" fill="#58c0ff" stroke="#0b3f8a" stroke-width="0.800" stroke-opacity="0.700"/></svg>
<span class="t" style="left:1157px;top:1017.0px;height:16px;line-height:16px;font-size:12px;color:#111;letter-spacing:0.22px;">Zyklus_Wic...</span>
<div style="left:1240px;top:1015px;width:103px;height:20px;background:#c6c6c6;border:1px solid #b0b0b0;border-bottom-color:#9a9a9a;"></div>
<svg style="left:1243px;top:1019px" width="16" height="12" viewBox="0 0 16 12"><path d="M0 3h3v2H0zM0 7h3v2H0zM12 5h4v2h-4z" fill="#124a1a"/><rect x="3" y="1" width="9" height="10" fill="#2fa03c"/><path d="M3 10.500h9M11.500 1v10" stroke="#124a1a" stroke-width="1" opacity="0.600"/><rect x="6.500" y="3.500" width="4" height="4.500" fill="#46d657" stroke="#124a1a" stroke-width="0.800" stroke-opacity="0.700"/></svg>
<span class="t" style="left:1263px;top:1017.0px;height:16px;line-height:16px;font-size:12px;color:#2a2a2a;letter-spacing:-0.14px;">Auto (FC20)</span>
<div style="left:1346px;top:1015px;width:103px;height:20px;background:#c6c6c6;border:1px solid #b0b0b0;border-bottom-color:#9a9a9a;"></div>
<svg style="left:1349px;top:1019px" width="16" height="12" viewBox="0 0 16 12"><path d="M0 3h3v2H0zM0 7h3v2H0zM12 5h4v2h-4z" fill="#124a1a"/><rect x="3" y="1" width="9" height="10" fill="#2fa03c"/><path d="M3 10.500h9M11.500 1v10" stroke="#124a1a" stroke-width="1" opacity="0.600"/><rect x="6.500" y="3.500" width="4" height="4.500" fill="#46d657" stroke="#124a1a" stroke-width="0.800" stroke-opacity="0.700"/></svg>
<span class="t" style="left:1369px;top:1017.0px;height:16px;line-height:16px;font-size:12px;color:#2a2a2a;letter-spacing:-0.31px;">Speicherun...</span>
<div style="left:1452px;top:1015px;width:103px;height:20px;background:#c6c6c6;border:1px solid #b0b0b0;border-bottom-color:#9a9a9a;"></div>
<svg style="left:1455px;top:1019px" width="16" height="12" viewBox="0 0 16 12"><path d="M0 3h3v2H0zM0 7h3v2H0zM12 5h4v2h-4z" fill="#124a1a"/><rect x="3" y="1" width="9" height="10" fill="#2fa03c"/><path d="M3 10.500h9M11.500 1v10" stroke="#124a1a" stroke-width="1" opacity="0.600"/><rect x="6.500" y="3.500" width="4" height="4.500" fill="#46d657" stroke="#124a1a" stroke-width="0.800" stroke-opacity="0.700"/></svg>
<span class="t" style="left:1475px;top:1017.0px;height:16px;line-height:16px;font-size:12px;color:#2a2a2a;letter-spacing:-0.44px;">SclScaleLin...</span>
<svg style="left:183px;top:1017px" width="17" height="16" viewBox="0 0 17 16"><rect x="0.500" y="0.500" width="16" height="15" fill="#f4f6fa" stroke="#24356f"/><rect x="1" y="1" width="15" height="3" fill="#24356f"/><path d="M2 7.500h3M7 7.500h3M12 7.500h3M2 11.500h3M7 11.500h3M12 11.500h3" stroke="#333" stroke-width="1.500" stroke-dasharray="1.500 0.800"/><path d="M5.500 4v11M10.800 4v11" stroke="#8a96b8" stroke-width="0.800"/></svg>
<svg style="left:1581px;top:1016px" width="20" height="18" viewBox="0 0 20 18"><rect x="0.500" y="0.500" width="19" height="17" fill="#e4e4e4" stroke="#555"/><path d="M3 3h4M3 5h6M3 7h5" stroke="#333"/><path d="M13 9V3.500m-2.500 2.500l2.500-2.800 2.500 2.800" stroke="#1c2c7a" stroke-width="1.600" fill="none"/><rect x="2.500" y="11.500" width="15" height="4.500" fill="#fff" stroke="#333"/><path d="M4 14.500h12" stroke="#333" stroke-dasharray="2 1"/></svg>
<div style="left:1607px;top:1011px;width:1px;height:32px;background:#4a4a4a;"></div>
<div style="left:1610px;top:1017px;width:16px;height:16px;background:#1a1ee0;border:1px solid #1a1a8a;border-radius:5px;"></div>
<svg style="left:1610px;top:1017px" width="16" height="16" viewBox="0 0 16 16"><path d="M3.500 8l3 3 5.500-7" fill="none" stroke="#fff" stroke-width="2"/></svg>
<span class="t" style="left:1631px;top:1018.2px;height:16.5px;line-height:16.5px;font-size:12.5px;color:#f0f0f0;letter-spacing:-0.34px;">Projekt 105_Wickelautomat_Sevi geöff...</span>
<svg style="left:18px;top:1038px" width="18" height="5" viewBox="0 0 18 5"><ellipse cx="9" cy="8" rx="8" ry="7" fill="#5a6a78" stroke="#aeb8c2" stroke-width="1.500"/></svg>
<div style="left:348px;top:1040px;width:48px;height:3px;background:#3a3a3a;"></div>
<div style="left:1895px;top:74px;width:24px;height:937px;background:#a8a8a8;"></div>
<div style="left:1896px;top:73px;width:23px;height:26px;background:#b2b2b2;"></div>
<svg style="left:1900px;top:80px" width="8" height="13" viewBox="0 0 8 13"><path d="M7.500 0.500v12l-7-6z" fill="#fff"/></svg>
<div style="left:1896px;top:104px;width:20px;height:133px;background:#e9e9e9;border:1px solid #c4c4c4;border-left:none;border-top-color:#f4f4f4;"></div>
<span class="t" style="left:0;top:0;height:16px;line-height:16px;font-size:13px;font-weight:bold;color:#111;letter-spacing:0.15px;transform-origin:0 0;transform:translate(1913px,126px) rotate(90deg);">Anweisungen</span>
<div style="left:1896px;top:241px;width:20px;height:86px;background:#dcdcdc;border:1px solid #c4c4c4;border-left:none;border-top-color:#f4f4f4;"></div>
<span class="t" style="left:0;top:0;height:16px;line-height:16px;font-size:13px;font-weight:bold;color:#626262;letter-spacing:-0.29px;transform-origin:0 0;transform:translate(1913px,266px) rotate(90deg);">Testen</span>
<div style="left:1896px;top:330px;width:20px;height:107px;background:#dcdcdc;border:1px solid #c4c4c4;border-left:none;border-top-color:#f4f4f4;"></div>
<span class="t" style="left:0;top:0;height:16px;line-height:16px;font-size:13px;font-weight:bold;color:#626262;letter-spacing:0.01px;transform-origin:0 0;transform:translate(1913px,354px) rotate(90deg);">Aufgaben</span>
<div style="left:1896px;top:439px;width:20px;height:127px;background:#dcdcdc;border:1px solid #c4c4c4;border-left:none;border-top-color:#f4f4f4;"></div>
<span class="t" style="left:0;top:0;height:16px;line-height:16px;font-size:13px;font-weight:bold;color:#626262;letter-spacing:0.09px;transform-origin:0 0;transform:translate(1913px,463px) rotate(90deg);">Bibliotheken</span>
<div style="left:870px;top:301px;width:82px;height:36px;background:#e0e1e9;"></div>
<div style="left:870px;top:301px;width:82px;height:15px;background:#cbcddd;"></div>
<div style="left:982px;top:301px;width:82px;height:207px;background:#e0e1e9;"></div>
<div style="left:982px;top:301px;width:82px;height:15px;background:#cbcddd;"></div>
<div style="left:534px;top:434px;width:82px;height:74px;background:#e0e1e9;"></div>
<div style="left:534px;top:434px;width:82px;height:33px;background:#cbcddd;"></div>
<div style="left:870px;top:453px;width:82px;height:55px;background:#e0e1e9;"></div>
<div style="left:870px;top:453px;width:82px;height:14px;background:#cbcddd;"></div>
<div style="left:982px;top:529px;width:82px;height:55px;background:#e0e1e9;"></div>
<div style="left:982px;top:529px;width:82px;height:14px;background:#cbcddd;"></div>
<div style="left:1094px;top:472px;width:82px;height:112px;background:#e0e1e9;"></div>
<div style="left:1094px;top:472px;width:82px;height:15px;background:#cbcddd;"></div>
<div style="left:1318px;top:529px;width:82px;height:112px;background:#e0e1e9;"></div>
<div style="left:1318px;top:529px;width:82px;height:33px;background:#cbcddd;"></div>
<div style="left:1542px;top:605px;width:82px;height:36px;background:#e0e1e9;"></div>
<div style="left:1542px;top:605px;width:82px;height:15px;background:#cbcddd;"></div>
<div style="left:1318px;top:662px;width:82px;height:112px;background:#e0e1e9;"></div>
<div style="left:1318px;top:662px;width:82px;height:33px;background:#cbcddd;"></div>
<div style="left:1318px;top:795px;width:82px;height:131px;background:#e0e1e9;"></div>
<div style="left:1318px;top:795px;width:82px;height:33px;background:#cbcddd;"></div>
<div style="left:557px;top:451px;width:35px;height:16px;background:#d2d4e1;border:1px solid #d9dbe6;"></div>
<div style="left:1330px;top:546px;width:57px;height:15px;background:#d2d4e1;border:1px solid #dcdeea;"></div>
<div style="left:1330px;top:679px;width:57px;height:15px;background:#d2d4e1;border:1px solid #dcdeea;"></div>
<div style="left:1330px;top:812px;width:57px;height:15px;background:#d2d4e1;border:1px solid #dcdeea;"></div>
<svg style="left:0;top:0" width="1919" height="1043" viewBox="0 0 1919 1043" fill="none"><path d="M952 328H982" stroke="#0a0a0a" stroke-width="2"/><path d="M519 480H534" stroke="#0a0a0a" stroke-width="2"/><path d="M519 499H534" stroke="#f2a22c" stroke-width="2"/><path d="M616 480H631" stroke="#f2a22c" stroke-width="2"/><path d="M616 499H870" stroke="#0a0a0a" stroke-width="2"/><path d="M855 480H870" stroke="#0a0a0a" stroke-width="2"/><path d="M952 499H982" stroke="#0a0a0a" stroke-width="2"/><path d="M1064 499H1094" stroke="#0a0a0a" stroke-width="2"/><path d="M968 555.5H976" stroke="#0a0a0a" stroke-width="2"/><path d="M968 574.5H982" stroke="#0a0a0a" stroke-width="2"/><path d="M1064 574.5H1094" stroke="#0a0a0a" stroke-width="2"/><path d="M1176 574.5H1318" stroke="#0a0a0a" stroke-width="2"/><path d="M1191 573.5V842" stroke="#0a0a0a" stroke-width="2"/><path d="M1190 708H1318" stroke="#0a0a0a" stroke-width="2"/><path d="M1190 841H1318" stroke="#0a0a0a" stroke-width="2"/><path d="M1303 613H1318" stroke="#f2a22c" stroke-width="2"/><path d="M1303 632H1318" stroke="#f2a22c" stroke-width="2"/><path d="M1406 613H1415" stroke="#f2a22c" stroke-width="2"/><rect x="1399" y="609.5" width="7" height="7" fill="#a4a4a4" stroke="#8a8a8a" stroke-width="0.800"/><path d="M1400 615.5l5-5" stroke="#d0d0d0" stroke-width="1"/><path d="M1303 746H1318" stroke="#f2a22c" stroke-width="2"/><path d="M1303 765H1318" stroke="#f2a22c" stroke-width="2"/><path d="M1406 746H1415" stroke="#f2a22c" stroke-width="2"/><rect x="1399" y="742.5" width="7" height="7" fill="#a4a4a4" stroke="#8a8a8a" stroke-width="0.800"/><path d="M1400 748.5l5-5" stroke="#d0d0d0" stroke-width="1"/><path d="M1303 898H1318" stroke="#f2a22c" stroke-width="2"/><path d="M1303 917H1318" stroke="#f2a22c" stroke-width="2"/><path d="M1406 898H1415" stroke="#f2a22c" stroke-width="2"/><rect x="1399" y="894.5" width="7" height="7" fill="#a4a4a4" stroke="#8a8a8a" stroke-width="0.800"/><path d="M1400 900.5l5-5" stroke="#d0d0d0" stroke-width="1"/><path d="M1400 632H1542" stroke="#0a0a0a" stroke-width="2"/><path d="M1624 632H1639" stroke="#0a0a0a" stroke-width="2"/><path d="M1400 765H1415" stroke="#0a0a0a" stroke-width="2"/><path d="M1400 917H1415" stroke="#0a0a0a" stroke-width="2"/><path d="M1345 574.5H1359.500V631.5H1366" stroke="#777a86" stroke-width="1" fill="none"/><path d="M1345 707.5H1359.500V764.5H1366" stroke="#777a86" stroke-width="1" fill="none"/><path d="M1345 840.5H1359.500V916.5H1366" stroke="#777a86" stroke-width="1" fill="none"/><circle cx="979.300" cy="555.500" r="2.600" fill="#fff" stroke="#0a0a0a" stroke-width="1.600"/><path d="M874.00 499H883.00M878.5 494.50V503.50M875.39 495.89L881.61 502.11M881.61 495.89L875.39 502.11" stroke="#4d5c0c" stroke-width="1.200" fill="none"/><path d="M876.25 499H880.75M878.5 496.75V501.25M876.95 497.45L880.05 500.55M880.05 497.45L876.95 500.55" stroke="#dcf224" stroke-width="1.400" fill="none"/><circle cx="878.5" cy="499" r="1.700" fill="#dcf224"/><path d="M986.00 499H995.00M990.5 494.50V503.50M987.39 495.89L993.61 502.11M993.61 495.89L987.39 502.11" stroke="#4d5c0c" stroke-width="1.200" fill="none"/><path d="M988.25 499H992.75M990.5 496.75V501.25M988.95 497.45L992.05 500.55M992.05 497.45L988.95 500.55" stroke="#dcf224" stroke-width="1.400" fill="none"/><circle cx="990.5" cy="499" r="1.700" fill="#dcf224"/><path d="M986.00 574.5H995.00M990.5 570.00V579.00M987.39 571.39L993.61 577.61M993.61 571.39L987.39 577.61" stroke="#4d5c0c" stroke-width="1.200" fill="none"/><path d="M988.25 574.5H992.75M990.5 572.25V576.75M988.95 572.95L992.05 576.05M992.05 572.95L988.95 576.05" stroke="#dcf224" stroke-width="1.400" fill="none"/><circle cx="990.5" cy="574.5" r="1.700" fill="#dcf224"/><path d="M1347.00 765H1356.00M1351.5 760.50V769.50M1348.39 761.89L1354.61 768.11M1354.61 761.89L1348.39 768.11" stroke="#4d5c0c" stroke-width="1.200" fill="none"/><path d="M1349.25 765H1353.75M1351.5 762.75V767.25M1349.95 763.45L1353.05 766.55M1353.05 763.45L1349.95 766.55" stroke="#dcf224" stroke-width="1.400" fill="none"/><circle cx="1351.5" cy="765" r="1.700" fill="#dcf224"/></svg>
<span class="t" style="left:894.5px;top:281.5px;height:15px;line-height:15px;font-size:11px;color:#1e1e1e;letter-spacing:0.83px;">#Start</span>
<span class="t" style="left:878px;top:338.5px;height:15px;line-height:15px;font-size:11px;color:#1e1e1e;letter-spacing:0.25px;">#Start_HIME</span>
<span class="t" style="left:907.3px;top:302.0px;height:15px;line-height:15px;font-size:11px;color:#1e1e1e;font-weight:bold;">P</span>
<span class="t" style="left:1011px;top:302.5px;height:15px;line-height:15px;font-size:11px;color:#1e1e1e;font-weight:bold;letter-spacing:1.5px;">&gt;=1</span>
<span class="t" style="left:1011px;top:531.5px;height:15px;line-height:15px;font-size:11px;color:#1e1e1e;font-weight:bold;letter-spacing:1.5px;">&gt;=1</span>
<span class="t" style="left:556px;top:384.0px;height:15px;line-height:15px;font-size:11px;color:#2b9aa6;font-weight:bold;letter-spacing:-0.35px;">%DB29</span>
<span class="t" style="left:536px;top:400.0px;height:15px;line-height:15px;font-size:11px;color:#1e1e1e;letter-spacing:0.26px;">"IEC_Timer_0_</span>
<span class="t" style="left:558.5px;top:413.5px;height:15px;line-height:15px;font-size:11px;color:#1e1e1e;letter-spacing:0.14px;">DB_9"</span>
<span class="t" style="left:563px;top:435.5px;height:15px;line-height:15px;font-size:11px;color:#1e1e1e;letter-spacing:-0.26px;-webkit-text-stroke:0.35px #1e1e1e;">TON</span>
<span class="t" style="left:561.5px;top:451.0px;height:15px;line-height:15px;font-size:11px;color:#1e1e1e;letter-spacing:0.32px;-webkit-text-stroke:0.35px #1e1e1e;">Time</span>
<span class="t" style="left:538.5px;top:473.5px;height:15px;line-height:15px;font-size:11px;color:#1e1e1e;letter-spacing:-0.5px;-webkit-text-stroke:0.35px #1e1e1e;">IN</span>
<span class="t" style="left:538.5px;top:492.5px;height:15px;line-height:15px;font-size:11px;color:#1e1e1e;letter-spacing:-1.2px;-webkit-text-stroke:0.35px #1e1e1e;">PT</span>
<span class="t" style="left:600.5px;top:473.5px;height:15px;line-height:15px;font-size:11px;color:#1e1e1e;letter-spacing:-1.2px;-webkit-text-stroke:0.35px #1e1e1e;">ET</span>
<span class="t" style="left:603.5px;top:492.5px;height:15px;line-height:15px;font-size:11px;color:#1e1e1e;-webkit-text-stroke:0.35px #1e1e1e;">Q</span>
<span class="t" style="left:422.5px;top:472.0px;height:15px;line-height:15px;font-size:11px;color:#1e1e1e;letter-spacing:0.59px;">#"Schritt 8 Ende"</span>
<span class="t" style="left:491px;top:491.0px;height:15px;line-height:15px;font-size:11px;color:#4b7db5;letter-spacing:1.07px;">t#2s</span>
<span class="t" style="left:634.5px;top:473.5px;height:15px;line-height:15px;font-size:11px;color:#1e1e1e;letter-spacing:-0.58px;">...</span>
<span class="t" style="left:906.5px;top:454.5px;height:15px;line-height:15px;font-size:11px;color:#1e1e1e;font-weight:bold;">&amp;</span>
<span class="t" style="left:818.5px;top:472.0px;height:15px;line-height:15px;font-size:11px;color:#1e1e1e;letter-spacing:0.93px;">#Start</span>
<span class="t" style="left:930px;top:548.0px;height:15px;line-height:15px;font-size:11px;color:#1e1e1e;letter-spacing:0.93px;">#Start</span>
<span class="t" style="left:901.5px;top:567.0px;height:15px;line-height:15px;font-size:11px;color:#1e1e1e;letter-spacing:0.66px;">#"Schritt 2"</span>
<span class="t" style="left:1103.5px;top:452.5px;height:15px;line-height:15px;font-size:11px;color:#1e1e1e;letter-spacing:0.66px;">#"Schritt 1"</span>
<span class="t" style="left:1127.5px;top:473.5px;height:15px;line-height:15px;font-size:11px;color:#1e1e1e;font-weight:bold;letter-spacing:-1.2px;">SR</span>
<span class="t" style="left:1098px;top:492.5px;height:15px;line-height:15px;font-size:11px;color:#1e1e1e;-webkit-text-stroke:0.35px #1e1e1e;">S</span>
<span class="t" style="left:1098px;top:569.0px;height:15px;line-height:15px;font-size:11px;color:#1e1e1e;letter-spacing:-1.2px;-webkit-text-stroke:0.35px #1e1e1e;">R1</span>
<span class="t" style="left:1163.5px;top:569.0px;height:15px;line-height:15px;font-size:11px;color:#1e1e1e;-webkit-text-stroke:0.35px #1e1e1e;">Q</span>
<span class="t" style="left:1347.5px;top:530.5px;height:15px;line-height:15px;font-size:11px;color:#1e1e1e;letter-spacing:-0.81px;-webkit-text-stroke:0.35px #1e1e1e;">SUB</span>
<span class="t" style="left:1333.5px;top:545.5px;height:15px;line-height:15px;font-size:11px;color:#1e1e1e;letter-spacing:0.47px;-webkit-text-stroke:0.35px #1e1e1e;">Auto (Int)</span>
<span class="t" style="left:1347.5px;top:663.5px;height:15px;line-height:15px;font-size:11px;color:#1e1e1e;letter-spacing:-0.36px;-webkit-text-stroke:0.35px #1e1e1e;">ADD</span>
<span class="t" style="left:1333.5px;top:678.5px;height:15px;line-height:15px;font-size:11px;color:#1e1e1e;letter-spacing:0.47px;-webkit-text-stroke:0.35px #1e1e1e;">Auto (Int)</span>
<span class="t" style="left:1347.5px;top:796.5px;height:15px;line-height:15px;font-size:11px;color:#1e1e1e;letter-spacing:-0.81px;-webkit-text-stroke:0.35px #1e1e1e;">SUB</span>
<span class="t" style="left:1333.5px;top:811.5px;height:15px;line-height:15px;font-size:11px;color:#1e1e1e;letter-spacing:0.47px;-webkit-text-stroke:0.35px #1e1e1e;">Auto (Int)</span>
<span class="t" style="left:1322px;top:568.5px;height:15px;line-height:15px;font-size:11px;color:#1e1e1e;letter-spacing:-0.28px;-webkit-text-stroke:0.35px #1e1e1e;">EN</span>
<span class="t" style="left:1322px;top:606.5px;height:15px;line-height:15px;font-size:11px;color:#1e1e1e;letter-spacing:-0.31px;-webkit-text-stroke:0.35px #1e1e1e;">IN1</span>
<span class="t" style="left:1322px;top:625.5px;height:15px;line-height:15px;font-size:11px;color:#1e1e1e;letter-spacing:-0.06px;-webkit-text-stroke:0.35px #1e1e1e;">IN2</span>
<span class="t" style="left:1374px;top:606.5px;height:15px;line-height:15px;font-size:11px;color:#1e1e1e;letter-spacing:-0.61px;-webkit-text-stroke:0.35px #1e1e1e;">OUT</span>
<span class="t" style="left:1372px;top:625.5px;height:15px;line-height:15px;font-size:11px;color:#a9abb6;letter-spacing:-0.42px;">ENO</span>
<span class="t" style="left:1322px;top:701.5px;height:15px;line-height:15px;font-size:11px;color:#1e1e1e;letter-spacing:-0.28px;-webkit-text-stroke:0.35px #1e1e1e;">EN</span>
<span class="t" style="left:1322px;top:739.5px;height:15px;line-height:15px;font-size:11px;color:#1e1e1e;letter-spacing:-0.31px;-webkit-text-stroke:0.35px #1e1e1e;">IN1</span>
<span class="t" style="left:1322px;top:758.5px;height:15px;line-height:15px;font-size:11px;color:#1e1e1e;letter-spacing:-0.06px;-webkit-text-stroke:0.35px #1e1e1e;">IN2</span>
<span class="t" style="left:1374px;top:739.5px;height:15px;line-height:15px;font-size:11px;color:#1e1e1e;letter-spacing:-0.61px;-webkit-text-stroke:0.35px #1e1e1e;">OUT</span>
<span class="t" style="left:1372px;top:758.5px;height:15px;line-height:15px;font-size:11px;color:#a9abb6;letter-spacing:-0.42px;">ENO</span>
<span class="t" style="left:1322px;top:834.5px;height:15px;line-height:15px;font-size:11px;color:#1e1e1e;letter-spacing:-0.28px;-webkit-text-stroke:0.35px #1e1e1e;">EN</span>
<span class="t" style="left:1322px;top:891.5px;height:15px;line-height:15px;font-size:11px;color:#1e1e1e;letter-spacing:-0.31px;-webkit-text-stroke:0.35px #1e1e1e;">IN1</span>
<span class="t" style="left:1322px;top:910.5px;height:15px;line-height:15px;font-size:11px;color:#1e1e1e;letter-spacing:-0.06px;-webkit-text-stroke:0.35px #1e1e1e;">IN2</span>
<span class="t" style="left:1374px;top:891.5px;height:15px;line-height:15px;font-size:11px;color:#1e1e1e;letter-spacing:-0.61px;-webkit-text-stroke:0.35px #1e1e1e;">OUT</span>
<span class="t" style="left:1372px;top:910.5px;height:15px;line-height:15px;font-size:11px;color:#a9abb6;letter-spacing:-0.42px;">ENO</span>
<span class="t" style="left:1237px;top:589.5px;height:15px;line-height:15px;font-size:11px;color:#1e1e1e;letter-spacing:0.68px;">#Startwert_</span>
<span class="t" style="left:1253.5px;top:603.5px;height:15px;line-height:15px;font-size:11px;color:#1e1e1e;letter-spacing:0.99px;">Kammer</span>
<span class="t" style="left:1294px;top:624.0px;height:15px;line-height:15px;font-size:11px;color:#6e9cc4;">1</span>
<span class="t" style="left:1418.5px;top:589.5px;height:15px;line-height:15px;font-size:11px;color:#1e1e1e;letter-spacing:0.96px;">#Kammer_</span>
<span class="t" style="left:1418.5px;top:603.5px;height:15px;line-height:15px;font-size:11px;color:#1e1e1e;letter-spacing:0.32px;">Start_Korr</span>
<span class="t" style="left:1536.5px;top:585.5px;height:15px;line-height:15px;font-size:11px;color:#1e1e1e;letter-spacing:0.59px;">#"Schritt 1 Ende"</span>
<span class="t" style="left:1579.3px;top:607.0px;height:15px;line-height:15px;font-size:11px;color:#1e1e1e;font-weight:bold;">=</span>
<span class="t" style="left:1241px;top:722.5px;height:15px;line-height:15px;font-size:11px;color:#1e1e1e;letter-spacing:0.8px;">#Endwert_</span>
<span class="t" style="left:1253.5px;top:736.5px;height:15px;line-height:15px;font-size:11px;color:#1e1e1e;letter-spacing:0.99px;">Kammer</span>
<span class="t" style="left:1293.5px;top:757.0px;height:15px;line-height:15px;font-size:11px;color:#4b7db5;">5</span>
<span class="t" style="left:1418.5px;top:722.5px;height:15px;line-height:15px;font-size:11px;color:#1e1e1e;letter-spacing:0.73px;">#Kammer_End_</span>
<span class="t" style="left:1418.5px;top:736.5px;height:15px;line-height:15px;font-size:11px;color:#1e1e1e;letter-spacing:0.07px;">Korr</span>
<span class="t" style="left:1242px;top:859.5px;height:15px;line-height:15px;font-size:11px;color:#1e1e1e;letter-spacing:0.74px;">#Sollwert_</span>
<span class="t" style="left:1246.5px;top:873.5px;height:15px;line-height:15px;font-size:11px;color:#1e1e1e;letter-spacing:0.97px;">Kammer_</span>
<span class="t" style="left:1239px;top:887.5px;height:15px;line-height:15px;font-size:11px;color:#1e1e1e;letter-spacing:0.67px;">Windungen</span>
<span class="t" style="left:1293.5px;top:908.5px;height:15px;line-height:15px;font-size:11px;color:#4b7db5;">5</span>
<span class="t" style="left:1418px;top:874.5px;height:15px;line-height:15px;font-size:11px;color:#1e1e1e;letter-spacing:0.84px;">#Bremsen_</span>
<span class="t" style="left:1418px;top:888.0px;height:15px;line-height:15px;font-size:11px;color:#1e1e1e;letter-spacing:0.32px;">Wickler</span>
<svg style="left:13px;top:52px" width="16" height="16" viewBox="0 0 16 16"><defs><linearGradient id="gnp" x1="0" y1="0" x2="1" y2="1"><stop offset="0" stop-color="#ffffff"/><stop offset="1" stop-color="#b9c3ee"/></linearGradient></defs><path d="M1.500 1.500h8l3 3v10h-11z" fill="url(#gnp)" stroke="#9aa4d6"/><path d="M6.00 4.5H15.00M10.5 0.00V9.00M7.40 1.40L13.61 7.60M13.61 1.40L7.40 7.60" stroke="#4d5c0c" stroke-width="1.200" fill="none"/><path d="M8.25 4.5H12.75M10.5 2.25V6.75M8.95 2.95L12.05 6.05M12.05 2.95L8.95 6.05" stroke="#dcf224" stroke-width="1.400" fill="none"/><circle cx="10.5" cy="4.5" r="1.700" fill="#dcf224"/></svg>
<div style="left:34px;top:49px;width:21px;height:21px;background:#e6e6e6;border:1px solid #f6f6f6;"></div>
<svg style="left:36px;top:51px" width="18" height="16" viewBox="0 0 18 16"><path d="M1 3.500h5l1.500 1.500h6.500v9h-13z" fill="#f2d46a" stroke="#b8922a"/><path d="M1.500 6.500h12v7.500h-12z" fill="#f8e49a"/><path d="M8 1.500c3 0 4.500 1.500 4.500 4h2.500l-3.800 4-3.800-4h2.300c0-1-.5-1.800-1.700-2z" fill="#2f9a3a" stroke="#1a6a24" stroke-width="0.700"/></svg>
<svg style="left:58px;top:52px" width="15" height="15" viewBox="0 0 15 15"><rect x="0.500" y="0.500" width="14" height="14" rx="1" fill="#1668d8" stroke="#0b3f9a"/><rect x="3" y="1.500" width="9" height="5.500" fill="#cfe6fb"/><rect x="3.500" y="9.500" width="8" height="5" fill="#0b3f9a"/><rect x="5" y="10.500" width="2.500" height="4" fill="#e8f2ff"/></svg>
<svg style="left:180px;top:52px" width="17" height="16" viewBox="0 0 17 16"><path d="M4.500 0.500h8v8h-8z" fill="#fff" stroke="#b4bcd8"/><path d="M6 2.500h5M6 4.500h5M6 6.500h5" stroke="#1c2030" stroke-width="1"/><path d="M1.500 8.500h14l0.500 4h-15z" fill="#3a5be0" stroke="#2a3eb0"/><ellipse cx="8.500" cy="13" rx="7.500" ry="2" fill="#6f88ee"/><path d="M3 10.500h11" stroke="#8aa0f4"/></svg>
<svg style="left:201px;top:50px" width="1" height="21"><path d="M0.500 0V21" stroke="#8e8e8e" stroke-dasharray="1 1"/></svg>
<svg style="left:210px;top:52px" width="13" height="16" viewBox="0 0 13 16"><g fill="none" stroke="#777" stroke-width="1.500"><path d="M2.500 1l6 10M10.500 1l-6 10"/><circle cx="3.300" cy="12.500" r="1.800"/><circle cx="9.700" cy="12.500" r="1.800"/></g></svg>
<svg style="left:233px;top:52px" width="16" height="16" viewBox="0 0 16 16"><path d="M0.500 0.500h8v10h-8z" fill="#f4f6fd" stroke="#9aa4d6"/><path d="M2 2.500h5M2 4.500h5M2 6.500h5M2 8.500h5" stroke="#1c2c7a" stroke-width="1"/><path d="M5.500 3.500h9v11h-9z" fill="#fff" stroke="#9aa4d6"/><path d="M7 5.500h6M7 7.500h6M7 9.500h6M7 11.500h6" stroke="#111" stroke-width="1"/></svg>
<svg style="left:257px;top:52px" width="16" height="16" viewBox="0 0 16 16"><path d="M1 2.500h9v10h-9z" fill="#d8d8d8" stroke="#a0a0a0"/><rect x="3.500" y="1" width="4" height="3" fill="#b8b8b8" stroke="#9a9a9a" stroke-width="0.600"/><path d="M6.500 6h8v9h-8z" fill="#f0f0f0" stroke="#a8a8a8"/><path d="M8 8.500h5M8 10.500h5M8 12.500h5" stroke="#8a8a8a"/></svg>
<svg style="left:282px;top:53px" width="14" height="14" viewBox="0 0 14 14"><path d="M1.500 1.500l11 11M12.500 1.500l-11 11" stroke="#222" stroke-width="2.100" stroke-linecap="round"/></svg>
<svg style="left:303px;top:50px" width="1" height="21"><path d="M0.500 0V21" stroke="#8e8e8e" stroke-dasharray="1 1"/></svg>
<svg style="left:308px;top:52px" width="17" height="16" viewBox="0 0 17 16"><path d="M1 1v7h7l-2.600-2.400c2.400-1 5.600.2 5.600 3.400 0 2.400-1.500 4-3.500 4.800 4-.1 6.700-2.300 6.700-5.800 0-4.200-5-7-10.400-4.200z" fill="#2a46c8" stroke="#14248a" stroke-width="0.600"/></svg>
<svg style="left:329px;top:55px" width="8" height="12" viewBox="0 0 8 12"><path d="M2.500 0h3v4h2.500l-4 4-4-4h2.500z M0.500 9.500h7v1.800h-7z" fill="#111"/></svg>
<svg style="left:343px;top:52px" width="17" height="16" viewBox="0 0 17 16"><path d="M16 1v7h-7l2.600-2.400c-2.400-1-5.600.2-5.600 3.400 0 2.400 1.500 4 3.500 4.800-4-.1-6.700-2.300-6.700-5.800 0-4.200 5-7 10.400-4.200z" fill="#8a8a8a" stroke="#6e6e6e" stroke-width="0.600"/></svg>
<svg style="left:363px;top:55px" width="8" height="12" viewBox="0 0 8 12"><path d="M2.500 0h3v4h2.500l-4 4-4-4h2.500z M0.500 9.500h7v1.800h-7z" fill="#a2a2a2"/></svg>
<svg style="left:378px;top:50px" width="1" height="21"><path d="M0.500 0V21" stroke="#8e8e8e" stroke-dasharray="1 1"/></svg>
<svg style="left:385px;top:52px" width="16" height="16" viewBox="0 0 16 16"><path d="M1 1h9v6h-9z" fill="#fff" stroke="#6a78b8"/><path d="M2.500 3h6M2.500 5h4" stroke="#24346e" stroke-width="1.200"/><path d="M5.500 7.500h10v8h-10z" fill="#f4f6ff" stroke="#3a4a9a"/><path d="M8.500 9.500v4M11.500 9.500h2v4h-2z" stroke="#111" stroke-width="1.300" fill="none"/></svg>
<svg style="left:409px;top:52px" width="16" height="16" viewBox="0 0 16 16"><rect x="0.500" y="0.500" width="15" height="14" fill="#4a5260" stroke="#2a303c"/><rect x="2" y="1.500" width="4" height="12" fill="#49c4d0"/><rect x="1" y="13" width="14" height="2" fill="#1c2030"/><path d="M9 2h3.500v6h2.500l-4.300 5-4.300-5h2.600z" fill="#fff"/></svg>
<svg style="left:433px;top:52px" width="16" height="16" viewBox="0 0 16 16"><rect x="0.500" y="0.500" width="15" height="14" fill="#9a9a9a" stroke="#7e7e7e"/><rect x="2" y="1.500" width="4" height="12" fill="#b8b8b8"/><rect x="1" y="13" width="14" height="2" fill="#6e6e6e"/><path d="M9 13h3.500v-6h2.500l-4.300-5-4.300 5h2.600z" fill="#fff"/></svg>
<svg style="left:457px;top:52px" width="15" height="16" viewBox="0 0 15 16"><rect x="0.500" y="0.500" width="14" height="10" fill="#2a5bd0" stroke="#1a2e7a"/><rect x="2.500" y="2" width="4" height="6" fill="#5ad0e0"/><rect x="8" y="2" width="4" height="6" fill="#3a78e8" stroke="#16307a" stroke-width="0.600"/><rect x="1" y="11.500" width="13" height="3.500" fill="#3a4050" stroke="#1c2030"/><path d="M3 13.300h5" stroke="#9ab"/></svg>
<svg style="left:481px;top:52px" width="16" height="16" viewBox="0 0 16 16"><rect x="0.500" y="0.500" width="13" height="12" fill="#8c8c8c" stroke="#707070"/><path d="M4 2.500l7 4-7 4z" fill="#b0b0b0" stroke="#eee" stroke-width="0.900"/><text x="5" y="15.500" font-size="7.500" font-weight="bold" font-family="Liberation Sans,sans-serif" fill="#222">RT</text></svg>
<svg style="left:502px;top:50px" width="1" height="21"><path d="M0.500 0V21" stroke="#8e8e8e" stroke-dasharray="1 1"/></svg>
<svg style="left:507px;top:52px" width="16" height="16" viewBox="0 0 16 16"><path d="M1 14l3-3" stroke="#c2410c" stroke-width="1.600"/><path d="M12 4l3-3" stroke="#c2410c" stroke-width="1.600"/><path d="M3 9.500l3.500-5 6 3.500-3.500 5.500z" fill="#f7752a" stroke="#c2410c"/><path d="M5 9l5-2.500" stroke="#ffd2a8" stroke-width="1.400"/><path d="M10.500 2.500l3 3-2 1.500-2.500-2.500z M2.500 10.500l3 3-1.500 1-2.500-2.500z" fill="#e85d18" stroke="#b83c08" stroke-width="0.600"/></svg>
<svg style="left:627px;top:52px" width="16" height="16" viewBox="0 0 16 16"><path d="M1 14l3-3M12 4l3-3" stroke="#8a8a8a" stroke-width="1.600"/><path d="M2.500 9.500l3.500-3.500 2.500 2.500-3.500 3.500z M8 6l3-3 2.500 2.500-3 3z" fill="#9a9a9a" stroke="#787878"/><path d="M6.500 6l3 3" stroke="#eee" stroke-width="1"/></svg>
<svg style="left:803px;top:50px" width="1" height="21"><path d="M0.500 0V21" stroke="#8e8e8e" stroke-dasharray="1 1"/></svg>
<svg style="left:811px;top:52px" width="17" height="16" viewBox="0 0 17 16"><rect x="4" y="0.500" width="4" height="4" fill="#2a9aa8" stroke="#14606a"/><path d="M6 4.500v3M2.500 10V7.500h7V10" stroke="#223" fill="none"/><rect x="0.500" y="10" width="4" height="5" fill="#3a6ad8" stroke="#1a2e8a"/><rect x="7.500" y="10" width="4" height="5" fill="#3a6ad8" stroke="#1a2e8a"/><text x="10.500" y="14.500" font-size="10" font-weight="bold" font-family="Liberation Sans,sans-serif" fill="#0c1440">?</text></svg>
<svg style="left:835px;top:52px" width="16" height="16" viewBox="0 0 16 16"><rect x="0.500" y="0.500" width="15" height="14" fill="#4a5260" stroke="#2a303c"/><rect x="2" y="1.500" width="4.500" height="12" fill="#49c4d0"/><rect x="1" y="13" width="14" height="2" fill="#1c2030"/><path d="M8.500 7.500l6.500 3.500-6.500 3.500z" fill="#3ad04a" stroke="#e8ffe8" stroke-width="0.800"/></svg>
<svg style="left:859px;top:52px" width="16" height="16" viewBox="0 0 16 16"><rect x="0.500" y="0.500" width="15" height="14" fill="#4a5260" stroke="#2a303c"/><rect x="2" y="1.500" width="4.500" height="12" fill="#49c4d0"/><rect x="1" y="13" width="14" height="2" fill="#1c2030"/><rect x="8.500" y="8" width="6.500" height="6.500" fill="#e81c1c" stroke="#ffd0d0" stroke-width="0.800"/></svg>
<svg style="left:880px;top:50px" width="1" height="21"><path d="M0.500 0V21" stroke="#8e8e8e" stroke-dasharray="1 1"/></svg>
<svg style="left:887px;top:52px" width="16" height="16" viewBox="0 0 16 16"><rect x="9" y="1" width="6" height="5" fill="#f4f4f4" stroke="#aaa"/><rect x="1" y="10" width="6" height="5" fill="#f4f4f4" stroke="#aaa"/><path d="M3 3.500l10 9.500M13 3.500l-10 9.500" stroke="#111" stroke-width="2"/></svg>
<svg style="left:910px;top:50px" width="1" height="21"><path d="M0.500 0V21" stroke="#8e8e8e" stroke-dasharray="1 1"/></svg>
<svg style="left:917px;top:52px" width="16" height="16" viewBox="0 0 16 16"><rect x="0.500" y="0.500" width="15" height="15" fill="#fff" stroke="#9aa4d6"/><path d="M0.500 8h15" stroke="#6a7ad0" stroke-width="1.600"/></svg>
<svg style="left:941px;top:52px" width="16" height="16" viewBox="0 0 16 16"><rect x="0.500" y="0.500" width="15" height="15" fill="#fff" stroke="#9aa4d6"/><path d="M8 0.500v15" stroke="#6a7ad0" stroke-width="1.600"/></svg>
<svg style="left:963px;top:50px" width="1" height="21"><path d="M0.500 0V21" stroke="#8e8e8e" stroke-dasharray="1 1"/></svg>
<svg style="left:1097px;top:52px" width="17" height="16" viewBox="0 0 17 16"><path d="M1 1h7v9h-7z" fill="#f4f6ff" stroke="#8c98d0"/><path d="M2.500 3h4M2.500 5h4M2.500 7h4" stroke="#1c2c7a"/><path d="M7 7h3v2h1V7h3l1.500 8h-4.500v-3h-1v3H5.500z" fill="#1c2c8a" stroke="#0c1450" stroke-width="0.600"/><rect x="7.500" y="5.500" width="2" height="2" fill="#223"/><rect x="11.500" y="5.500" width="2" height="2" fill="#223"/></svg>
<svg style="left:28px;top:180px" width="8" height="5" viewBox="0 0 8 5"><path d="M0 0h8l-4 4.500z" fill="#111"/></svg>
<svg style="left:46px;top:237px" width="8" height="5" viewBox="0 0 8 5"><path d="M0 0h8l-4 4.500z" fill="#111"/></svg>
<svg style="left:64px;top:294px" width="8" height="5" viewBox="0 0 8 5"><path d="M0 0h8l-4 4.500z" fill="#111"/></svg>
<svg style="left:30px;top:132px" width="16" height="16" viewBox="0 0 16 16"><path d="M0.500 3.500h9l5 0v11h-14z" fill="#e2e2e2" stroke="#a4a4a4"/><g stroke="#8c8c8c" stroke-width="1"><path d="M11 0.500v7M7.500 4h7M8.500 1.500l5 5M13.500 1.500l-5 5"/></g><circle cx="11" cy="4" r="1.300" fill="#f4f4f4"/></svg>
<div style="left:331px;top:129px;width:22px;height:22px;background:#f0f2f8;border:1px solid #3a4a8a;border-radius:2px;"></div>
<svg style="left:336px;top:133px" width="13" height="13" viewBox="0 0 13 13"><rect x="0.500" y="0.500" width="12" height="12" fill="#fff" stroke="#555"/><path d="M0.500 3h12" stroke="#555"/><path d="M2 5.500h9M2 7.500h9M2 9.500h9" stroke="#8090c8" stroke-dasharray="2 1"/></svg>
<svg style="left:358px;top:131px" width="16" height="17" viewBox="0 0 16 17"><rect x="0.500" y="5.500" width="11" height="10" fill="#fff" stroke="#333"/><path d="M0.500 8h11M4 8v7.500M8 8v7.500M0.500 11.500h11" stroke="#333"/><rect x="1" y="8.500" width="3" height="3" fill="#e8b040"/><rect x="4.500" y="12" width="3.500" height="3" fill="#e8b040"/><path d="M6 1.500c4 0 6 1 6 4.500h2.500l-3.500 4-3.500-4h2.300c0-1.500-1-2.500-3.800-2.500z" fill="#2f9a3a" stroke="#1a6a24" stroke-width="0.600"/></svg>
<svg style="left:44px;top:175px" width="13" height="15" viewBox="0 0 13 15"><defs><linearGradient id="gpg" x1="0" y1="0" x2="1" y2="1"><stop offset="0" stop-color="#ffffff"/><stop offset="1" stop-color="#c4ccf2"/></linearGradient></defs><path d="M0.500 0.500h8l3.500 3.500v10h-11.500z" fill="url(#gpg)" stroke="#9aa4d6"/><path d="M8.500 0.500v3.500h3.500" fill="#e8ecfb" stroke="#9aa4d6"/></svg>
<svg style="left:60px;top:194px" width="17" height="16" viewBox="0 0 17 16"><defs><linearGradient id="gbs" x1="0" y1="0" x2="1" y2="1"><stop offset="0" stop-color="#5a6cf0"/><stop offset="1" stop-color="#1c2cc0"/></linearGradient></defs><path d="M0 4.500h12v10.500H0z" fill="url(#gbs)"/><path d="M7.50 4.5H16.50M12 0.00V9.00M8.89 1.40L15.11 7.60M15.11 1.40L8.89 7.60" stroke="#4d5c0c" stroke-width="1.200" fill="none"/><path d="M9.75 4.5H14.25M12 2.25V6.75M10.45 2.95L13.55 6.05M13.55 2.95L10.45 6.05" stroke="#dcf224" stroke-width="1.400" fill="none"/><circle cx="12" cy="4.5" r="1.700" fill="#dcf224"/></svg>
<svg style="left:96px;top:308px" width="17" height="16" viewBox="0 0 17 16"><defs><linearGradient id="gbs" x1="0" y1="0" x2="1" y2="1"><stop offset="0" stop-color="#5a6cf0"/><stop offset="1" stop-color="#1c2cc0"/></linearGradient></defs><path d="M0 4.500h12v10.500H0z" fill="url(#gbs)"/><path d="M7.50 4.5H16.50M12 0.00V9.00M8.89 1.40L15.11 7.60M15.11 1.40L8.89 7.60" stroke="#4d5c0c" stroke-width="1.200" fill="none"/><path d="M9.75 4.5H14.25M12 2.25V6.75M10.45 2.95L13.55 6.05M13.55 2.95L10.45 6.05" stroke="#dcf224" stroke-width="1.400" fill="none"/><circle cx="12" cy="4.5" r="1.700" fill="#dcf224"/></svg>
<svg style="left:60px;top:213px" width="14" height="15" viewBox="0 0 14 15"><rect x="5" y="0.500" width="4" height="5" fill="#3ac0c8" stroke="#1a7a84"/><path d="M7 5.500v3M2.500 10.500V8.500h9v2M7 8.500v2" stroke="#223" fill="none"/><rect x="0.500" y="10.500" width="3.500" height="4" fill="#5a8af0" stroke="#1a2e8a"/><rect x="5.300" y="10.500" width="3.500" height="4" fill="#5a8af0" stroke="#1a2e8a"/><rect x="10" y="10.500" width="3.500" height="4" fill="#5a8af0" stroke="#1a2e8a"/></svg>
<svg style="left:59px;top:232px" width="17" height="16" viewBox="0 0 17 16"><path d="M0.500 1.500h5l1.500 2h6.500v10h-13z" fill="#f4d878" stroke="#b8922a"/><path d="M1 5h12v8h-12z" fill="#fae8a4"/><rect x="6" y="5.500" width="10" height="9.500" fill="#3a4250" stroke="#1c2030"/><rect x="7" y="6.500" width="3" height="8" fill="#49c4d0"/></svg>
<svg style="left:78px;top:251px" width="16" height="16" viewBox="0 0 16 16"><rect x="0.500" y="0.500" width="7" height="14" fill="#49c4d0" stroke="#1a5a74"/><rect x="3" y="1" width="2" height="13" fill="#a8ecf2"/><rect x="0.500" y="13" width="7" height="2" fill="#1c2030"/><path d="M10 1c-1.500.5-2 1.500-2 3 0 1.500 1 2.200 1.700 2.500v8h2.600v-8c.7-.3 1.700-1 1.700-2.500 0-1.500-.5-2.500-2-3v3h-2z" fill="#2a6ac8" stroke="#143a84" stroke-width="0.600"/></svg>
<svg style="left:80px;top:271px" width="12" height="14" viewBox="0 0 12 14"><rect x="0.500" y="0.500" width="11" height="12.500" fill="#fafbff" stroke="#8a96c8"/><path d="M3 2.500v3.500c0 1.500 1 2.200 2 2.200s2-.7 2-2.200v-3.500M5 8.200v1.300c0 1 .8 1.500 1.800 1.500h.7" fill="none" stroke="#1c2c7a" stroke-width="1.200"/><circle cx="8.500" cy="10.500" r="1.300" fill="#1c2c7a"/></svg>
<svg style="left:78px;top:289px" width="16" height="15" viewBox="0 0 16 15"><path d="M0.500 1.500h5l1.500 2h6.500v10h-13z" fill="#f4d878" stroke="#b8922a"/><path d="M1 5h12v8h-12z" fill="#fae8a4"/><path d="M3 10.500h3M12 10.500h3" stroke="#222" stroke-width="1.300"/><rect x="5.500" y="7.500" width="7" height="6" rx="1" fill="#4a5060" stroke="#1c2030"/><rect x="7.500" y="9" width="3" height="3" fill="#c8ccd8"/></svg>
<svg style="left:96px;top:329px" width="16" height="12" viewBox="0 0 16 12"><path d="M0 3h3v2H0zM0 7h3v2H0zM12 5h4v2h-4z" fill="#470a86"/><rect x="3" y="1" width="9" height="10" fill="#a82ae8"/><path d="M3 10.500h9M11.500 1v10" stroke="#470a86" stroke-width="1" opacity="0.600"/><rect x="6.500" y="3.500" width="4" height="4.500" fill="#d050ff" stroke="#470a86" stroke-width="0.800" stroke-opacity="0.700"/></svg>
<svg style="left:96px;top:348px" width="16" height="12" viewBox="0 0 16 12"><path d="M0 3h3v2H0zM0 7h3v2H0zM12 5h4v2h-4z" fill="#124a1a"/><rect x="3" y="1" width="9" height="10" fill="#2fa03c"/><path d="M3 10.500h9M11.500 1v10" stroke="#124a1a" stroke-width="1" opacity="0.600"/><rect x="6.500" y="3.500" width="4" height="4.500" fill="#46d657" stroke="#124a1a" stroke-width="0.800" stroke-opacity="0.700"/></svg>
<svg style="left:96px;top:367px" width="16" height="12" viewBox="0 0 16 12"><path d="M0 3h3v2H0zM0 7h3v2H0zM12 5h4v2h-4z" fill="#124a1a"/><rect x="3" y="1" width="9" height="10" fill="#2fa03c"/><path d="M3 10.500h9M11.500 1v10" stroke="#124a1a" stroke-width="1" opacity="0.600"/><rect x="6.500" y="3.500" width="4" height="4.500" fill="#46d657" stroke="#124a1a" stroke-width="0.800" stroke-opacity="0.700"/></svg>
<svg style="left:96px;top:386px" width="16" height="12" viewBox="0 0 16 12"><path d="M0 3h3v2H0zM0 7h3v2H0zM12 5h4v2h-4z" fill="#124a1a"/><rect x="3" y="1" width="9" height="10" fill="#2fa03c"/><path d="M3 10.500h9M11.500 1v10" stroke="#124a1a" stroke-width="1" opacity="0.600"/><rect x="6.500" y="3.500" width="4" height="4.500" fill="#46d657" stroke="#124a1a" stroke-width="0.800" stroke-opacity="0.700"/></svg>
<svg style="left:96px;top:405px" width="16" height="12" viewBox="0 0 16 12"><path d="M0 3h3v2H0zM0 7h3v2H0zM12 5h4v2h-4z" fill="#124a1a"/><rect x="3" y="1" width="9" height="10" fill="#2fa03c"/><path d="M3 10.500h9M11.500 1v10" stroke="#124a1a" stroke-width="1" opacity="0.600"/><rect x="6.500" y="3.500" width="4" height="4.500" fill="#46d657" stroke="#124a1a" stroke-width="0.800" stroke-opacity="0.700"/></svg>
<svg style="left:96px;top:424px" width="16" height="12" viewBox="0 0 16 12"><path d="M0 3h3v2H0zM0 7h3v2H0zM12 5h4v2h-4z" fill="#124a1a"/><rect x="3" y="1" width="9" height="10" fill="#2fa03c"/><path d="M3 10.500h9M11.500 1v10" stroke="#124a1a" stroke-width="1" opacity="0.600"/><rect x="6.500" y="3.500" width="4" height="4.500" fill="#46d657" stroke="#124a1a" stroke-width="0.800" stroke-opacity="0.700"/></svg>
<svg style="left:96px;top:443px" width="16" height="12" viewBox="0 0 16 12"><path d="M0 3h3v2H0zM0 7h3v2H0zM12 5h4v2h-4z" fill="#124a1a"/><rect x="3" y="1" width="9" height="10" fill="#2fa03c"/><path d="M3 10.500h9M11.500 1v10" stroke="#124a1a" stroke-width="1" opacity="0.600"/><rect x="6.500" y="3.500" width="4" height="4.500" fill="#46d657" stroke="#124a1a" stroke-width="0.800" stroke-opacity="0.700"/></svg>
<svg style="left:96px;top:462px" width="16" height="12" viewBox="0 0 16 12"><path d="M0 3h3v2H0zM0 7h3v2H0zM12 5h4v2h-4z" fill="#124a1a"/><rect x="3" y="1" width="9" height="10" fill="#2fa03c"/><path d="M3 10.500h9M11.500 1v10" stroke="#124a1a" stroke-width="1" opacity="0.600"/><rect x="6.500" y="3.500" width="4" height="4.500" fill="#46d657" stroke="#124a1a" stroke-width="0.800" stroke-opacity="0.700"/></svg>
<svg style="left:96px;top:481px" width="16" height="12" viewBox="0 0 16 12"><path d="M0 3h3v2H0zM0 7h3v2H0zM12 5h4v2h-4z" fill="#124a1a"/><rect x="3" y="1" width="9" height="10" fill="#2fa03c"/><path d="M3 10.500h9M11.500 1v10" stroke="#124a1a" stroke-width="1" opacity="0.600"/><rect x="6.500" y="3.500" width="4" height="4.500" fill="#46d657" stroke="#124a1a" stroke-width="0.800" stroke-opacity="0.700"/></svg>
<svg style="left:96px;top:500px" width="16" height="12" viewBox="0 0 16 12"><path d="M0 3h3v2H0zM0 7h3v2H0zM12 5h4v2h-4z" fill="#124a1a"/><rect x="3" y="1" width="9" height="10" fill="#2fa03c"/><path d="M3 10.500h9M11.500 1v10" stroke="#124a1a" stroke-width="1" opacity="0.600"/><rect x="6.500" y="3.500" width="4" height="4.500" fill="#46d657" stroke="#124a1a" stroke-width="0.800" stroke-opacity="0.700"/></svg>
<svg style="left:96px;top:519px" width="16" height="12" viewBox="0 0 16 12"><path d="M0 3h3v2H0zM0 7h3v2H0zM12 5h4v2h-4z" fill="#124a1a"/><rect x="3" y="1" width="9" height="10" fill="#2fa03c"/><path d="M3 10.500h9M11.500 1v10" stroke="#124a1a" stroke-width="1" opacity="0.600"/><rect x="6.500" y="3.500" width="4" height="4.500" fill="#46d657" stroke="#124a1a" stroke-width="0.800" stroke-opacity="0.700"/></svg>
<svg style="left:96px;top:538px" width="16" height="12" viewBox="0 0 16 12"><path d="M0 3h3v2H0zM0 7h3v2H0zM12 5h4v2h-4z" fill="#124a1a"/><rect x="3" y="1" width="9" height="10" fill="#2fa03c"/><path d="M3 10.500h9M11.500 1v10" stroke="#124a1a" stroke-width="1" opacity="0.600"/><rect x="6.500" y="3.500" width="4" height="4.500" fill="#46d657" stroke="#124a1a" stroke-width="0.800" stroke-opacity="0.700"/></svg>
<svg style="left:96px;top:557px" width="16" height="12" viewBox="0 0 16 12"><path d="M0 3h3v2H0zM0 7h3v2H0zM12 5h4v2h-4z" fill="#124a1a"/><rect x="3" y="1" width="9" height="10" fill="#2fa03c"/><path d="M3 10.500h9M11.500 1v10" stroke="#124a1a" stroke-width="1" opacity="0.600"/><rect x="6.500" y="3.500" width="4" height="4.500" fill="#46d657" stroke="#124a1a" stroke-width="0.800" stroke-opacity="0.700"/></svg>
<svg style="left:96px;top:576px" width="16" height="12" viewBox="0 0 16 12"><path d="M0 3h3v2H0zM0 7h3v2H0zM12 5h4v2h-4z" fill="#124a1a"/><rect x="3" y="1" width="9" height="10" fill="#2fa03c"/><path d="M3 10.500h9M11.500 1v10" stroke="#124a1a" stroke-width="1" opacity="0.600"/><rect x="6.500" y="3.500" width="4" height="4.500" fill="#46d657" stroke="#124a1a" stroke-width="0.800" stroke-opacity="0.700"/></svg>
<svg style="left:96px;top:595px" width="16" height="12" viewBox="0 0 16 12"><path d="M0 3h3v2H0zM0 7h3v2H0zM12 5h4v2h-4z" fill="#124a1a"/><rect x="3" y="1" width="9" height="10" fill="#2fa03c"/><path d="M3 10.500h9M11.500 1v10" stroke="#124a1a" stroke-width="1" opacity="0.600"/><rect x="6.500" y="3.500" width="4" height="4.500" fill="#46d657" stroke="#124a1a" stroke-width="0.800" stroke-opacity="0.700"/></svg>
<svg style="left:96px;top:614px" width="16" height="12" viewBox="0 0 16 12"><path d="M0 3h3v2H0zM0 7h3v2H0zM12 5h4v2h-4z" fill="#124a1a"/><rect x="3" y="1" width="9" height="10" fill="#2fa03c"/><path d="M3 10.500h9M11.500 1v10" stroke="#124a1a" stroke-width="1" opacity="0.600"/><rect x="6.500" y="3.500" width="4" height="4.500" fill="#46d657" stroke="#124a1a" stroke-width="0.800" stroke-opacity="0.700"/></svg>
<svg style="left:96px;top:633px" width="16" height="12" viewBox="0 0 16 12"><path d="M0 3h3v2H0zM0 7h3v2H0zM12 5h4v2h-4z" fill="#124a1a"/><rect x="3" y="1" width="9" height="10" fill="#2fa03c"/><path d="M3 10.500h9M11.500 1v10" stroke="#124a1a" stroke-width="1" opacity="0.600"/><rect x="6.500" y="3.500" width="4" height="4.500" fill="#46d657" stroke="#124a1a" stroke-width="0.800" stroke-opacity="0.700"/></svg>
<svg style="left:96px;top:652px" width="16" height="12" viewBox="0 0 16 12"><path d="M0 3h3v2H0zM0 7h3v2H0zM12 5h4v2h-4z" fill="#124a1a"/><rect x="3" y="1" width="9" height="10" fill="#2fa03c"/><path d="M3 10.500h9M11.500 1v10" stroke="#124a1a" stroke-width="1" opacity="0.600"/><rect x="6.500" y="3.500" width="4" height="4.500" fill="#46d657" stroke="#124a1a" stroke-width="0.800" stroke-opacity="0.700"/></svg>
<svg style="left:96px;top:671px" width="16" height="12" viewBox="0 0 16 12"><path d="M0 3h3v2H0zM0 7h3v2H0zM12 5h4v2h-4z" fill="#124a1a"/><rect x="3" y="1" width="9" height="10" fill="#2fa03c"/><path d="M3 10.500h9M11.500 1v10" stroke="#124a1a" stroke-width="1" opacity="0.600"/><rect x="6.500" y="3.500" width="4" height="4.500" fill="#46d657" stroke="#124a1a" stroke-width="0.800" stroke-opacity="0.700"/></svg>
<svg style="left:96px;top:690px" width="16" height="12" viewBox="0 0 16 12"><path d="M0 3h3v2H0zM0 7h3v2H0zM12 5h4v2h-4z" fill="#124a1a"/><rect x="3" y="1" width="9" height="10" fill="#2fa03c"/><path d="M3 10.500h9M11.500 1v10" stroke="#124a1a" stroke-width="1" opacity="0.600"/><rect x="6.500" y="3.500" width="4" height="4.500" fill="#46d657" stroke="#124a1a" stroke-width="0.800" stroke-opacity="0.700"/></svg>
<svg style="left:96px;top:709px" width="16" height="12" viewBox="0 0 16 12"><path d="M0 3h3v2H0zM0 7h3v2H0zM12 5h4v2h-4z" fill="#0b3f8a"/><rect x="3" y="1" width="9" height="10" fill="#1f86e0"/><path d="M3 10.500h9M11.500 1v10" stroke="#0b3f8a" stroke-width="1" opacity="0.600"/><rect x="6.500" y="3.500" width="4" height="4.500" fill="#58c0ff" stroke="#0b3f8a" stroke-width="0.800" stroke-opacity="0.700"/></svg>
<svg style="left:96px;top:728px" width="16" height="12" viewBox="0 0 16 12"><path d="M0 3h3v2H0zM0 7h3v2H0zM12 5h4v2h-4z" fill="#0b3f8a"/><rect x="3" y="1" width="9" height="10" fill="#1f86e0"/><path d="M3 10.500h9M11.500 1v10" stroke="#0b3f8a" stroke-width="1" opacity="0.600"/><rect x="6.500" y="3.500" width="4" height="4.500" fill="#58c0ff" stroke="#0b3f8a" stroke-width="0.800" stroke-opacity="0.700"/></svg>
<svg style="left:98px;top:746px;opacity:1" width="12" height="14" viewBox="0 0 12 14"><defs><linearGradient id="gdb" x1="0" x2="1"><stop offset="0" stop-color="#7a86f4"/><stop offset="0.400" stop-color="#4a58e8"/><stop offset="1" stop-color="#2230b8"/></linearGradient></defs><path d="M0.500 2.500v9c0 1.200 2.500 2 5.500 2s5.500-.8 5.500-2v-9z" fill="url(#gdb)"/><ellipse cx="6" cy="2.500" rx="5.500" ry="2" fill="#a4aef8"/></svg>
<div style="left:96px;top:764px;width:16px;height:6px;overflow:hidden;background:none;"><svg style="left:2px;top:1px" width="12" height="14" viewBox="0 0 12 14"><ellipse cx="6" cy="2.500" rx="5.500" ry="2" fill="#a4aef8"/><path d="M0.500 2.500v9h11v-9z" fill="#6a76ee"/></svg></div>
<svg style="left:391px;top:132px" width="17" height="16" viewBox="0 0 17 16"><g transform="translate(1,8.500)"><g stroke="#2a3cb0" stroke-width="1.900" fill="none"><path d="M1 0v6.500M5.500 0l-3.500 3.250 3.500 3.250M12 0v6.500M7.500 0l3.500 3.250-3.500 3.250"/></g></g><path d="M5.00 5H14.00M9.5 0.50V9.50M6.40 1.90L12.61 8.11M12.61 1.90L6.40 8.11" stroke="#4f6e10" stroke-width="1.200" fill="none"/><path d="M7.25 5H11.75M9.5 2.75V7.25M7.95 3.45L11.05 6.55M11.05 3.45L7.95 6.55" stroke="#eaf53a" stroke-width="1.400" fill="none"/><circle cx="9.5" cy="5" r="1.700" fill="#eaf53a"/></svg>
<svg style="left:415px;top:132px" width="17" height="16" viewBox="0 0 17 16"><g transform="translate(1,8.500)"><g stroke="#2a3cb0" stroke-width="1.900" fill="none"><path d="M1 0v6.500M5.500 0l-3.500 3.250 3.500 3.250M12 0v6.500M7.500 0l3.500 3.250-3.500 3.250"/></g></g><path d="M6.500 2.500l6.500 6M13.500 1.500l-6 7" stroke="#10164a" stroke-width="1.800"/></svg>
<svg style="left:438px;top:132px" width="17" height="16" viewBox="0 0 17 16"><path d="M1 6.500h8M1 9.500h9" stroke="#b4b4b4" stroke-width="1.800"/><path d="M3 12.500h8" stroke="#8e8e8e" stroke-width="1.800"/><path d="M1 15h6" stroke="#b4b4b4" stroke-width="1.400"/><path d="M8.00 5H17.00M12.5 0.50V9.50M9.39 1.90L15.61 8.11M15.61 1.90L9.39 8.11" stroke="#8a8a8a" stroke-width="1.200" fill="none"/><path d="M10.25 5H14.75M12.5 2.75V7.25M10.95 3.45L14.05 6.55M14.05 3.45L10.95 6.55" stroke="#e8e8e8" stroke-width="1.400" fill="none"/><circle cx="12.5" cy="5" r="1.700" fill="#e8e8e8"/></svg>
<svg style="left:462px;top:132px" width="17" height="16" viewBox="0 0 17 16"><path d="M1 6.500h8M1 9.500h9" stroke="#b4b4b4" stroke-width="1.800"/><path d="M3 12.500h8" stroke="#8e8e8e" stroke-width="1.800"/><path d="M1 15h6" stroke="#b4b4b4" stroke-width="1.400"/><path d="M8.00 5H17.00M12.5 0.50V9.50M9.39 1.90L15.61 8.11M15.61 1.90L9.39 8.11" stroke="#8a8a8a" stroke-width="1.200" fill="none"/><path d="M10.25 5H14.75M12.5 2.75V7.25M10.95 3.45L14.05 6.55M14.05 3.45L10.95 6.55" stroke="#e8e8e8" stroke-width="1.400" fill="none"/><circle cx="12.5" cy="5" r="1.700" fill="#e8e8e8"/></svg>
<svg style="left:484px;top:128px" width="1" height="23"><path d="M0.500 0V23" stroke="#9a9a9a" stroke-dasharray="1 1"/></svg>
<svg style="left:492px;top:131px" width="16" height="17" viewBox="0 0 16 17"><path d="M1 2.500v8c0 1 1.500 1.800 3.500 1.800s3.500-.8 3.500-1.800v-8z" fill="#a8a8a8"/><ellipse cx="4.500" cy="2.500" rx="3.500" ry="1.500" fill="#c4c4c4"/><path d="M9.500 11.500h3c1.500 0 2 1 2 2.500v2" fill="none" stroke="#9a9a9a" stroke-width="1.600"/><path d="M7.500 11.500l3-2.500v5z" fill="#9a9a9a"/></svg>
<svg style="left:513px;top:128px" width="1" height="23"><path d="M0.500 0V23" stroke="#9a9a9a" stroke-dasharray="1 1"/></svg>
<svg style="left:521px;top:133px" width="16" height="15" viewBox="0 0 16 15"><path d="M0 2h6M0 5.500h16M0 9h16M0 12.500h16" stroke="#8a8a8a" stroke-width="2.200"/><path d="M0 1h5l1.500 3h9.500" stroke="#8a8a8a" stroke-width="1" fill="none"/></svg>
<svg style="left:545px;top:132px" width="15" height="15" viewBox="0 0 15 15"><rect x="0.500" y="0.500" width="14" height="14" fill="#f4f6ff" stroke="#2a3cc0"/><rect x="1" y="1" width="13" height="3.500" fill="#2a3cc0"/><path d="M3 1.500h4l-2 2.500z" fill="#fff"/><path d="M2 9.500h11M2.500 7.500v4" stroke="#141c5a" stroke-width="1.300"/></svg>
<svg style="left:568px;top:133px" width="16" height="13" viewBox="0 0 16 13"><rect x="0.500" y="0.500" width="15" height="12" fill="#2a3cc8" stroke="#141c8a"/><path d="M1 6.500h14" stroke="#e8ecff" stroke-width="1.200"/><path d="M1.500 1l3 2.500-3 2.500zM1.500 7.500l3 2.500-3 2.500z" fill="#fff"/></svg>
<div style="left:590px;top:129px;width:22px;height:22px;background:#f4f6fc;border:1px solid #4a5aa0;border-radius:2px;"></div>
<svg style="left:594px;top:132px" width="14" height="15" viewBox="0 0 14 15"><path d="M7 1c3.500 0 6.500 2 6.500 5s-3 5-6.500 5c-.8 0-1.500-.1-2.200-.3l-3.300 2.800 1-3.800c-1.200-.9-2-2.200-2-3.700 0-3 3-5 6.500-5z" fill="#fff" stroke="#8a82c8" stroke-width="1.200"/><path d="M3.500 6.500h1.700M6.200 6.500h1.700M8.900 6.500h1.700" stroke="#111" stroke-width="1.800"/></svg>
<svg style="left:616px;top:132px" width="16" height="16" viewBox="0 0 16 16"><path d="M4 4l2.500-2.500h9v5h-9z" fill="#7a2ac0" stroke="#4a1088" stroke-width="0.700"/><path d="M7.5 4h6.5" stroke="#fff" stroke-width="1.500"/><path d="M1 4h3" stroke="#222" stroke-width="1.200"/><path d="M4 12l2.500-2.500h9v5h-9z" fill="#7a2ac0" stroke="#4a1088" stroke-width="0.700"/><path d="M7.5 12h6.5" stroke="#fff" stroke-width="1.500"/><path d="M1 12h3" stroke="#222" stroke-width="1.200"/><path d="M9.500 2.500v3M12 2.500h1.500v3H12z" stroke="#fff" stroke-width="0.900" fill="none"/></svg>
<svg style="left:636px;top:135px" width="8" height="12" viewBox="0 0 8 12"><path d="M2.500 0h3v4h2.500l-4 4-4-4h2.500z M0.500 9.500h7v1.800h-7z" fill="#111"/></svg>
<svg style="left:651px;top:132px" width="16" height="16" viewBox="0 0 16 16"><path d="M7 0.500c3 0 5.500 1.500 5.500 3.800S10 8 7 8c-.6 0-1.200-.1-1.700-.2L3 9.500l.6-2.500C2.500 6.300 2 5.400 2 4.300 2 2 4 .5 7 .5z" fill="#fff" stroke="#8a82c8"/><path d="M4.500 3.500h5M4.500 5.500h3.500" stroke="#222"/><path d="M3 12.500l3-3h8.500v6H6z" fill="#7a2ac0" stroke="#4a1088" stroke-width="0.700"/><path d="M0 12.500h3" stroke="#222" stroke-width="1.200"/></svg>
<svg style="left:671px;top:135px" width="8" height="12" viewBox="0 0 8 12"><path d="M2.500 0h3v4h2.500l-4 4-4-4h2.500z M0.500 9.500h7v1.800h-7z" fill="#111"/></svg>
<svg style="left:686px;top:132px" width="16" height="16" viewBox="0 0 16 16"><g transform="translate(2,0)"><g stroke="#2a3cc8" stroke-width="1.900" fill="none"><path d="M1 0.5v6.500M5.500 0.5l-3.500 3.250 3.500 3.250M12 0.5v6.500M7.500 0.5l3.500 3.250-3.500 3.250"/></g></g><path d="M4 12l2.500-2.500h9v5h-9z" fill="#7a2ac0" stroke="#4a1088" stroke-width="0.700"/><path d="M7.5 12h6.5" stroke="#fff" stroke-width="1.500"/><path d="M1 12h3" stroke="#222" stroke-width="1.200"/></svg>
<svg style="left:706px;top:135px" width="8" height="12" viewBox="0 0 8 12"><path d="M2.500 0h3v4h2.500l-4 4-4-4h2.500z M0.500 9.500h7v1.800h-7z" fill="#111"/></svg>
<div style="left:719px;top:129px;width:22px;height:22px;background:#f4f6fc;border:1px solid #4a5aa0;border-radius:2px;"></div>
<svg style="left:723px;top:133px" width="14" height="14" viewBox="0 0 14 14"><rect x="0.500" y="0.500" width="13" height="13" fill="#fff" stroke="#aab"/><path d="M3 4.500h8M3 9.500h8" stroke="#111" stroke-width="1.500"/><path d="M3.500 2.500v4M3.500 7.500v4" stroke="#111" stroke-width="1.300"/></svg>
<div style="left:743px;top:129px;width:22px;height:22px;background:#f4f6fc;border:1px solid #4a5aa0;border-radius:2px;"></div>
<svg style="left:745px;top:131px" width="19" height="18" viewBox="0 0 19 18"><rect x="1.500" y="1.500" width="3" height="3" fill="#fff" stroke="#5a6ab8"/><rect x="1.500" y="6.500" width="3" height="3" fill="#fff" stroke="#5a6ab8"/><rect x="1.500" y="11.500" width="3" height="3" fill="#fff" stroke="#5a6ab8"/><path d="M12 1l1.800 3.700 4 .5-3 2.800.8 4-3.600-2-3.600 2 .8-4-3-2.800 4-.5z" fill="#f8dc3a" stroke="#c8961a" stroke-width="0.800"/><path d="M14.500 12.500v2h-5M11 12.500l-2 2 2 2" stroke="#111" stroke-width="1.300" fill="none"/></svg>
<svg style="left:768px;top:128px" width="1" height="23"><path d="M0.500 0V23" stroke="#9a9a9a" stroke-dasharray="1 1"/></svg>
<svg style="left:774px;top:131px" width="18" height="17" viewBox="0 0 18 17"><path d="M6.500 15.500C1.500 13 1 6.500 5 4" stroke="#141c4a" stroke-width="2.300" fill="none"/><path d="M2.800 1.800l7 .2-3 6z" fill="#141c4a"/><circle cx="13.5" cy="4.5" r="3.600" fill="#e83030" stroke="#b01818" stroke-width="0.600"/><path d="M11.8 2.8l3.400 3.400M15.2 2.8l-3.400 3.400" stroke="#fff" stroke-width="1.300"/></svg>
<svg style="left:798px;top:131px" width="18" height="17" viewBox="0 0 18 17"><path d="M6.500 1C1.500 3.500 1 10 5 12.500" stroke="#141c4a" stroke-width="2.300" fill="none"/><path d="M2.800 14.700l7-.2-3-6z" fill="#141c4a"/><circle cx="13.5" cy="12.5" r="3.600" fill="#e83030" stroke="#b01818" stroke-width="0.600"/><path d="M11.8 10.8l3.400 3.400M15.2 10.8l-3.400 3.400" stroke="#fff" stroke-width="1.300"/></svg>
<svg style="left:822px;top:131px" width="17" height="17" viewBox="0 0 17 17"><path d="M6.500 15.500C1.500 13 1 6.500 5 4" stroke="#8a8a8a" stroke-width="2.300" fill="none"/><path d="M2.800 1.800l7 .2-3 6z" fill="#8a8a8a"/><rect x="7" y="1" width="9" height="9" fill="#9a9a9a" stroke="#7a7a7a"/><rect x="8.500" y="5.5" width="6" height="3.500" fill="#f0f0f0"/><path d="M10 6.3v2M12 6.3h1.500v2H12z" stroke="#333" stroke-width="0.800" fill="none"/></svg>
<svg style="left:846px;top:131px" width="17" height="17" viewBox="0 0 17 17"><path d="M6.500 1C1.500 3.500 1 10 5 12.500" stroke="#8a8a8a" stroke-width="2.300" fill="none"/><path d="M2.800 14.700l7-.2-3-6z" fill="#8a8a8a"/><rect x="7" y="6" width="9" height="9" fill="#9a9a9a" stroke="#7a7a7a"/><rect x="8.500" y="10.5" width="6" height="3.500" fill="#f0f0f0"/><path d="M10 11.3v2M12 11.3h1.500v2H12z" stroke="#333" stroke-width="0.800" fill="none"/></svg>
<svg style="left:871px;top:131px" width="16" height="17" viewBox="0 0 16 17"><path d="M0 4h3M0 7h3M13 5.500h3" stroke="#333" stroke-width="1.300"/><rect x="3" y="1.500" width="10" height="8.500" fill="#3a4250" stroke="#1c2030"/><path d="M6 3.500l4 2.300-4 2.300z" fill="#e8ecf4"/><path d="M4 11.500l3 3.500 7-7" fill="none" stroke="#1a7a24" stroke-width="3.200"/><path d="M4 11.500l3 3.500 7-7" fill="none" stroke="#3ac04a" stroke-width="1.600"/></svg>
<svg style="left:892px;top:128px" width="1" height="23"><path d="M0.500 0V23" stroke="#9a9a9a" stroke-dasharray="1 1"/></svg>
<svg style="left:899px;top:131px" width="17" height="17" viewBox="0 0 17 17"><path d="M6.500 1C1.500 3.500 1 10 5 12.500" stroke="#141c4a" stroke-width="2.300" fill="none"/><path d="M2.800 14.700l7-.2-3-6z" fill="#141c4a"/><path d="M9 5h7M9 8h7M9 11h7" stroke="#3a4ec8" stroke-width="1.800"/></svg>
<svg style="left:925px;top:132px" width="15" height="15" viewBox="0 0 15 15"><path d="M1.500 0v6" stroke="#555" stroke-width="2"/><path d="M5 7h9M5 10h9M5 13h9" stroke="#9a9a9a" stroke-width="2"/></svg>
<svg style="left:948px;top:132px" width="15" height="15" viewBox="0 0 15 15"><path d="M1 0l6 8" stroke="#777" stroke-width="1.500"/><path d="M0 3h4" stroke="#777"/><path d="M6 7h9M6 10h9M6 13h9" stroke="#9a9a9a" stroke-width="2"/></svg>
<svg style="left:969px;top:128px" width="1" height="23"><path d="M0.500 0V23" stroke="#9a9a9a" stroke-dasharray="1 1"/></svg>
<svg style="left:977px;top:131px" width="15" height="17" viewBox="0 0 15 17"><path d="M6.500 1C1.500 3.500 1 10 5 12.500" stroke="#0c1030" stroke-width="2.300" fill="none"/><path d="M2.800 14.700l7-.2-3-6z" fill="#0c1030"/><path d="M9 3h4.500v12l-2.250-2-2.250 2z" fill="#3a5ae0" stroke="#1c2c9a" stroke-width="0.600"/></svg>
<svg style="left:1001px;top:131px" width="15" height="17" viewBox="0 0 15 17"><path d="M6.500 15.500C1.500 13 1 6.500 5 4" stroke="#0c1030" stroke-width="2.300" fill="none"/><path d="M2.800 1.800l7 .2-3 6z" fill="#0c1030"/><path d="M9 0.5h4.500v12l-2.250-2-2.250 2z" fill="#3a5ae0" stroke="#1c2c9a" stroke-width="0.600"/></svg>
<svg style="left:1022px;top:128px" width="1" height="23"><path d="M0.500 0V23" stroke="#9a9a9a" stroke-dasharray="1 1"/></svg>
<svg style="left:1030px;top:132px" width="16" height="16" viewBox="0 0 16 16"><ellipse cx="4.500" cy="11" rx="4" ry="3" fill="#a4a4a4"/><path d="M4.500 8v6" stroke="#e0e0e0"/><circle cx="9" cy="3.500" r="2.800" fill="#f4f4f4" stroke="#8a8a8a" stroke-width="1.200"/><path d="M11 5.500l3.500 3.500" stroke="#8a8a8a" stroke-width="1.800"/></svg>
<svg style="left:1054px;top:132px" width="17" height="16" viewBox="0 0 17 16"><rect x="0.500" y="1.500" width="5" height="4" rx="1" fill="#dfe8f4" stroke="#141c4a" stroke-width="1.300"/><rect x="8" y="1.500" width="5" height="4" rx="1" fill="#dfe8f4" stroke="#141c4a" stroke-width="1.300"/><path d="M5.500 3h2.500M13 3h2.500v2.500" stroke="#141c4a" stroke-width="1.200" fill="none"/><path d="M8 9.500l6.500 2.500-6.500 3z" fill="#3ac04a" stroke="#c8f0c8" stroke-width="0.600"/></svg>
<svg style="left:1075px;top:128px" width="1" height="23"><path d="M0.500 0V23" stroke="#9a9a9a" stroke-dasharray="1 1"/></svg>
<svg style="left:1083px;top:131px" width="16" height="17" viewBox="0 0 16 17"><defs><linearGradient id="gor" x1="0" x2="1"><stop offset="0" stop-color="#f8a060"/><stop offset="0.500" stop-color="#f06018"/><stop offset="1" stop-color="#c03c08"/></linearGradient></defs><path d="M0.500 3v10c0 1.200 2 2 4.500 2s4.500-.8 4.500-2v-10z" fill="url(#gor)"/><ellipse cx="5" cy="3" rx="4.500" ry="2" fill="#fde4d0" stroke="#e08048" stroke-width="0.600"/><rect x="9.500" y="11" width="6" height="5" fill="#2a5ac0" stroke="#14307a" stroke-width="0.600"/><path d="M10.800 11v-1.500a1.700 1.700 0 013.400 0V11" fill="none" stroke="#14307a" stroke-width="1.200"/></svg>
<svg style="left:1863px;top:132px" width="16" height="16" viewBox="0 0 16 16"><rect x="0.500" y="0.500" width="13" height="13" fill="#fff" stroke="#8a96c8"/><rect x="1" y="1" width="12" height="2.500" fill="#c4ccee"/><path d="M0.500 8h13" stroke="#8a96c8"/><rect x="9" y="10" width="6" height="5" fill="#2a5ac0" stroke="#14307a" stroke-width="0.600"/><path d="M10.300 10v-1.800a1.700 1.700 0 013.400 0V10" fill="none" stroke="#111" stroke-width="1.200"/></svg>
<svg style="left:409px;top:198px" width="16" height="9" viewBox="0 0 16 9"><path d="M0.500 4.500l4.500-4h10.500v8h-10.500z" fill="#2a9ac8" stroke="#14608a"/><path d="M8 2.500h2v4h-2zM12.500 2.500v4" stroke="#fff" stroke-width="1.100" fill="none"/><circle cx="4.200" cy="4.500" r="0.900" fill="#e8f4fc"/></svg>
<svg style="left:409px;top:217px" width="16" height="9" viewBox="0 0 16 9"><path d="M0.500 4.500l4.500-4h10.500v8h-10.500z" fill="#2a9ac8" stroke="#14608a"/><path d="M8 2.500h2v4h-2zM12.500 2.500v4" stroke="#fff" stroke-width="1.100" fill="none"/><circle cx="4.200" cy="4.500" r="0.900" fill="#e8f4fc"/></svg>
<svg style="left:433px;top:200px" width="8" height="5" viewBox="0 0 8 5"><path d="M0 0h8l-4 4.500z" fill="#111"/></svg>
<div style="left:433px;top:219px;width:5px;height:5px;background:#3a4eb8;"></div>
<div style="left:700px;top:213px;width:17px;height:17px;background:linear-gradient(#f4f4f8,#d0d0da);border:1px solid #7a7e96;border-radius:3px;"></div>
<svg style="left:704px;top:216px" width="9" height="11" viewBox="0 0 9 11"><rect x="0.500" y="0.500" width="8" height="10" fill="#fff" stroke="#555"/><path d="M2 3h1M4 3h3M2 5.500h1M4 5.500h3M2 8h1M4 8h3" stroke="#333"/></svg>
<div style="left:879px;top:213px;width:17px;height:17px;background:linear-gradient(#f4f4f4,#d8d8d8);border:1px solid #7a7a7a;"></div>
<svg style="left:883px;top:219px" width="10" height="6" viewBox="0 0 10 6"><path d="M0.500 0.500h9l-4.500 5z" fill="#1c2c9a"/></svg>
<div style="left:930px;top:195.5px;width:14px;height:14px;background:linear-gradient(#fafafa,#ececec);border:1px solid #b4b4b4;border-radius:2px;"></div>
<div style="left:995px;top:195.5px;width:14px;height:14px;background:linear-gradient(#fafafa,#ececec);border:1px solid #b4b4b4;border-radius:2px;"></div>
<div style="left:1055px;top:195.5px;width:14px;height:14px;background:linear-gradient(#fafafa,#ececec);border:1px solid #b4b4b4;border-radius:2px;"></div>
<div style="left:1125px;top:195.5px;width:14px;height:14px;background:linear-gradient(#fafafa,#ececec);border:1px solid #b4b4b4;border-radius:2px;"></div>
<div style="left:930px;top:214.5px;width:14px;height:14px;background:linear-gradient(135deg,#8fd0f4,#2a7ad0);border:1px solid #2a4a8a;border-radius:2px;"></div>
<svg style="left:931px;top:215.5px" width="12" height="12" viewBox="0 0 12 12"><path d="M2.500 6l2.800 3 4.500-6.500" fill="none" stroke="#0c1440" stroke-width="1.900"/></svg>
<div style="left:995px;top:214.5px;width:14px;height:14px;background:linear-gradient(135deg,#8fd0f4,#2a7ad0);border:1px solid #2a4a8a;border-radius:2px;"></div>
<svg style="left:996px;top:215.5px" width="12" height="12" viewBox="0 0 12 12"><path d="M2.500 6l2.800 3 4.500-6.500" fill="none" stroke="#0c1440" stroke-width="1.900"/></svg>
<div style="left:1055px;top:214.5px;width:14px;height:14px;background:linear-gradient(135deg,#8fd0f4,#2a7ad0);border:1px solid #2a4a8a;border-radius:2px;"></div>
<svg style="left:1056px;top:215.5px" width="12" height="12" viewBox="0 0 12 12"><path d="M2.500 6l2.800 3 4.500-6.500" fill="none" stroke="#0c1440" stroke-width="1.900"/></svg>
<div style="left:1125px;top:214.5px;width:14px;height:14px;background:linear-gradient(#fafafa,#ececec);border:1px solid #b4b4b4;border-radius:2px;"></div>
<span class="t" style="left:397px;top:250.5px;height:14px;line-height:14px;font-size:10px;color:#111;font-weight:bold;">&amp;</span>
<span class="t" style="left:427px;top:250.8px;height:13.5px;line-height:13.5px;font-size:9.5px;color:#111;font-weight:bold;letter-spacing:1.31px;">&gt;=1</span>
<svg style="left:461px;top:249px" width="18" height="16" viewBox="0 0 18 16"><rect x="1.500" y="2.500" width="15" height="12" fill="#fff" stroke="#111" stroke-width="1.200"/><path d="M0 2.500h2M16 2.500h2" stroke="#111"/><text x="5" y="12" font-size="9" font-weight="bold" font-family="Liberation Sans,sans-serif" fill="#111">??</text></svg>
<svg style="left:498px;top:252px" width="10" height="11" viewBox="0 0 10 11"><path d="M0 5.500h8" stroke="#111" stroke-width="1.800"/><path d="M8.500 1v9" stroke="#111" stroke-width="1.800"/></svg>
<svg style="left:527px;top:252px" width="18" height="11" viewBox="0 0 18 11"><path d="M0 5.500h6" stroke="#111" stroke-width="1.800"/><circle cx="9.500" cy="5.500" r="2.200" fill="none" stroke="#111" stroke-width="1.500"/><path d="M16 1v9" stroke="#111" stroke-width="1.800"/></svg>
<svg style="left:562px;top:252px" width="17" height="11" viewBox="0 0 17 11"><path d="M1 1.500v8M1 5.500h13" stroke="#111" stroke-width="1.800"/><path d="M11 1.500l5.500 4-5.500 4z" fill="#111"/></svg>
<svg style="left:596px;top:250px" width="22" height="15" viewBox="0 0 22 15"><path d="M0 7.500h5" stroke="#111" stroke-width="1.800"/><path d="M9 1.500h-3.500v12h3.500M17 1.500h3.500v12h-3.500" fill="none" stroke="#111" stroke-width="1.800"/><path d="M10.500 6h5M10.500 9h5" stroke="#111" stroke-width="1.300"/></svg>
<svg style="left:1503px;top:991px" width="16" height="15" viewBox="0 0 16 15"><rect x="0.500" y="0.500" width="12" height="13" fill="#f4f6ff" stroke="#6a78b8"/><path d="M2 3h8M2 5.500h6M2 8h5" stroke="#4a5aa0"/><circle cx="10" cy="8" r="3.200" fill="#fff8e0" stroke="#7a5a1a" stroke-width="1.200"/><path d="M12.300 10.500l3.200 3.500" stroke="#7a5a1a" stroke-width="1.800"/></svg>
<svg style="left:1641px;top:990px" width="17" height="17" viewBox="0 0 17 17"><rect x="3.500" y="3.500" width="11" height="12" fill="#f8f9ff" stroke="#6a78b8"/><path d="M1 1.500l2.500 2.500M3.500 1v3.500H0" stroke="#111" stroke-width="1.200" fill="none"/><text x="7.500" y="13.500" font-size="11" font-weight="bold" font-family="Liberation Serif,serif" fill="#141c6a">i</text><path d="M10 11h6M14 9l2.500 2-2.500 2" stroke="#111" stroke-width="1.200" fill="none"/></svg>
<svg style="left:1692px;top:993px" width="13" height="13" viewBox="0 0 13 13"><circle cx="6.500" cy="6.500" r="6" fill="#f4d43a" stroke="#a07a10"/><text x="5" y="10.500" font-size="10" font-weight="bold" font-family="Liberation Serif,serif" fill="#111">i</text></svg>
<svg style="left:1720px;top:991px" width="12" height="15" viewBox="0 0 12 15"><rect x="0.500" y="0.500" width="11" height="14" fill="#fafbff" stroke="#8a96c8"/><path d="M3 2.500v4c0 1.500 1 2.200 2 2.200s2-.7 2-2.200v-4M5 8.700v1.500c0 1 .8 1.500 1.800 1.500h.5" fill="none" stroke="#1c2c7a" stroke-width="1.200"/><circle cx="8.500" cy="11.700" r="1.300" fill="#1c2c7a"/></svg>
<svg style="left:1897px;top:107px" width="14" height="14" viewBox="0 0 14 14"><g fill="#fff" stroke="#333" stroke-width="0.900"><rect x="0.500" y="0.500" width="5" height="5"/><rect x="8.500" y="0.500" width="5" height="5"/><rect x="0.500" y="8.500" width="5" height="5"/><rect x="8.500" y="8.500" width="5" height="5"/></g><path d="M2 3h2M10 2.300h2M10 3.800h2M2 11h2M10 11h2" stroke="#111" stroke-width="0.900"/></svg>
<svg style="left:1898px;top:245px" width="13" height="15" viewBox="0 0 13 15"><rect x="0.500" y="0.500" width="12" height="14" fill="#fafbff" stroke="#8a96c8"/><path d="M3 2.500v4c0 1.500 1 2.200 2 2.200s2-.7 2-2.200v-4M5 8.700v1.500c0 1 .8 1.500 1.800 1.500h.5" fill="none" stroke="#1c2c7a" stroke-width="1.200"/><circle cx="9" cy="11.700" r="1.300" fill="#1c2c7a"/></svg>
<svg style="left:1897px;top:333px" width="16" height="16" viewBox="0 0 16 16"><rect x="1.500" y="2.500" width="10" height="12" fill="#fff" stroke="#555"/><rect x="4" y="1" width="5" height="3" fill="#e8b040" stroke="#8a6a1a" stroke-width="0.600"/><path d="M3.500 6.500h6M3.500 8.500h6M3.500 10.500h4" stroke="#24346e"/><path d="M7 11l3 3.500 5.500-7" fill="none" stroke="#1a8a2a" stroke-width="2"/></svg>
<svg style="left:1897px;top:443px" width="15" height="15" viewBox="0 0 15 15"><path d="M0.500 1.500c2.500-1 5-1 7 .5 2-1.500 4.500-1.500 7-.5v11c-2.500-1-5-1-7 .5-2-1.500-4.500-1.500-7-.5z" fill="#fff" stroke="#1c2c8a" stroke-width="1.200"/><path d="M7.500 2v11.500" stroke="#1c2c8a" stroke-width="1.200"/></svg>
</div>
</body></html>
